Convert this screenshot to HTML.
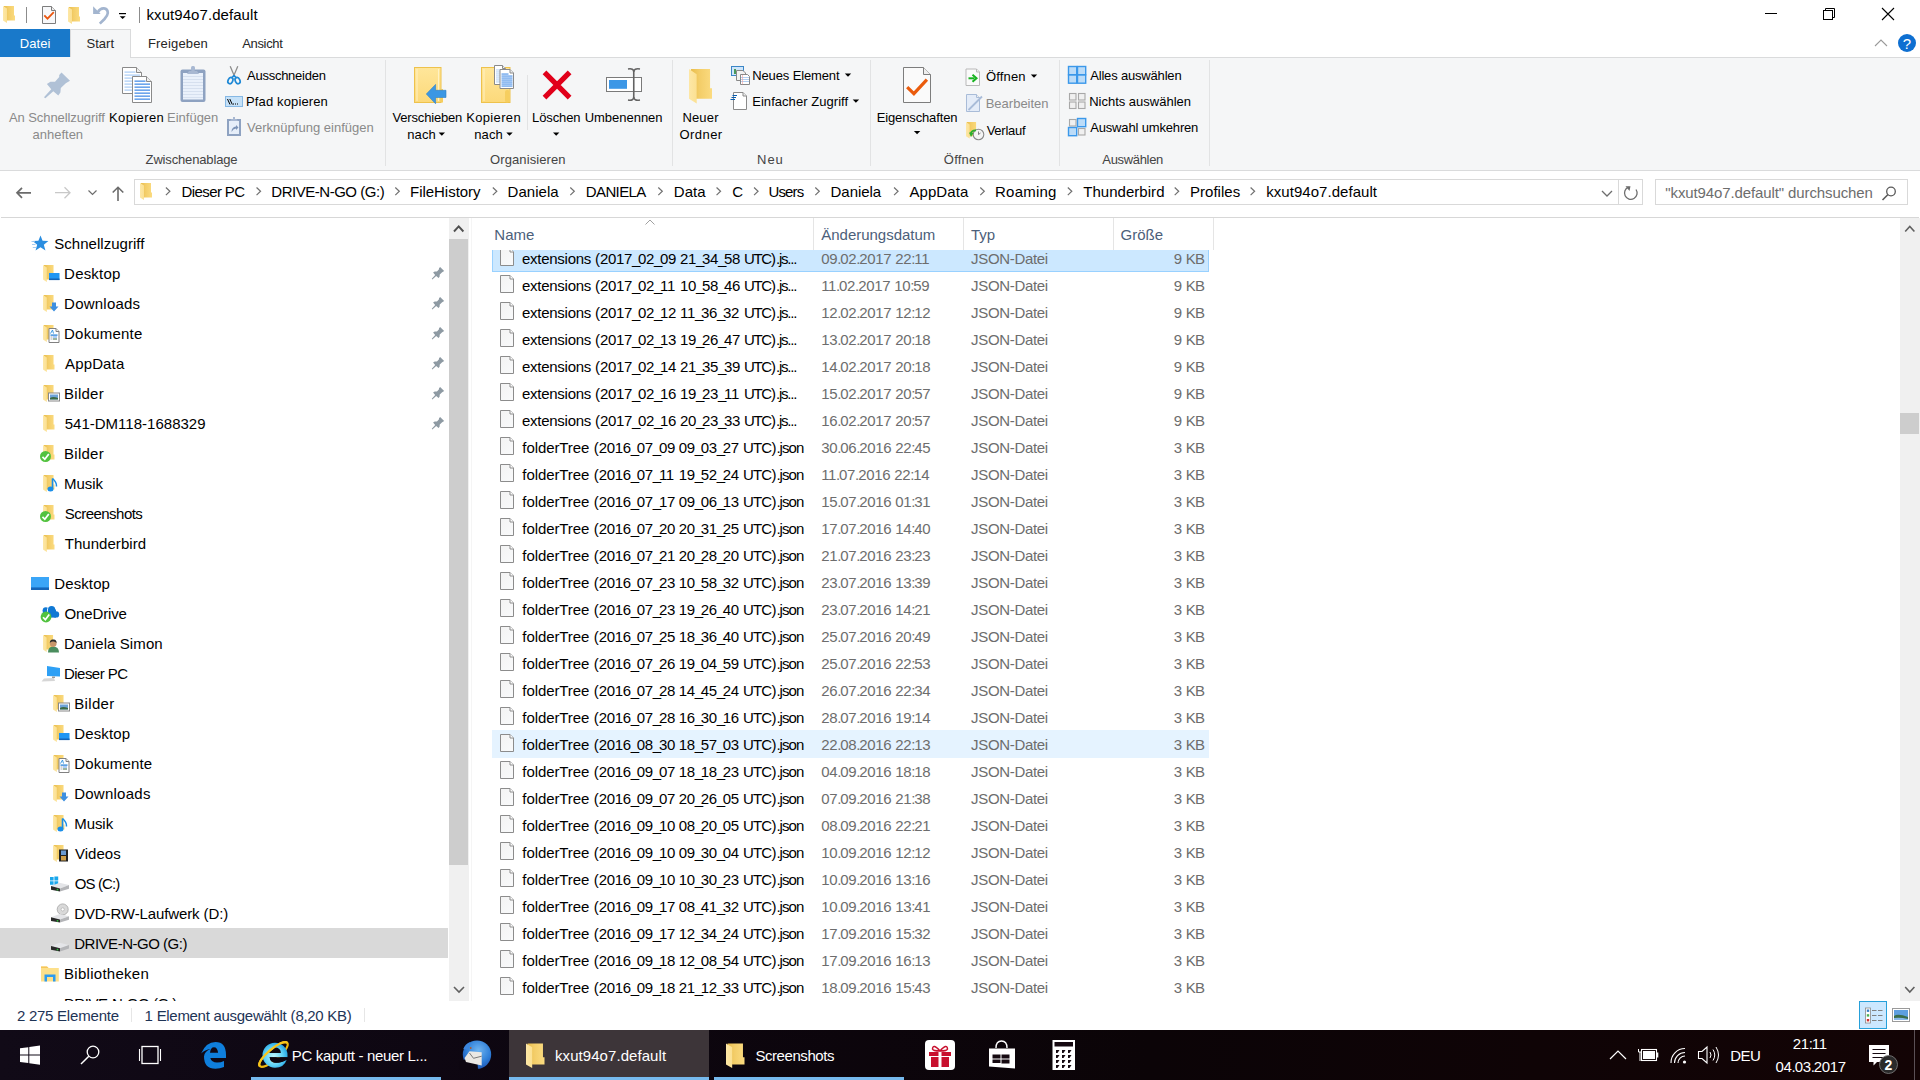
<!DOCTYPE html>
<html><head><meta charset="utf-8"><style>
html,body{margin:0;padding:0;width:1920px;height:1080px;overflow:hidden;background:#fff}
body{position:relative;font-family:"Liberation Sans",sans-serif}
.t{position:absolute;white-space:nowrap}
.r{position:absolute}
.i{position:absolute;overflow:visible}
#nav{position:absolute;left:0;top:218px;width:449px;height:783px;overflow:hidden}
#navin{position:absolute;left:0;top:-218px;width:449px;height:1300px}
#list{position:absolute;left:472px;top:250px;width:1428px;height:751px;overflow:hidden}
#listin{position:absolute;left:-472px;top:-250px;width:1920px;height:1300px}
</style></head><body>
<div class="r" style="left:0px;top:0px;width:1920px;height:29px;background:#fff;"></div><div class="t" style="left:146.50px;top:7.30px;font-size:15px;line-height:15px;color:#000;letter-spacing:0.067px">kxut94o7.default</div><div class="r" style="left:0px;top:29px;width:70px;height:28px;background:#1979ca;"></div><div class="r" style="left:70px;top:29px;width:61px;height:29px;background:#f5f6f7;border:1px solid #dadbdc;border-bottom:none;box-sizing:border-box"></div><div class="t" style="left:19.70px;top:37.00px;font-size:13px;line-height:13px;color:#fff;letter-spacing:0.100px">Datei</div><div class="t" style="left:86.50px;top:37.00px;font-size:13px;line-height:13px;color:#262626;letter-spacing:0.025px">Start</div><div class="t" style="left:148.00px;top:37.00px;font-size:13px;line-height:13px;color:#262626;letter-spacing:0.162px">Freigeben</div><div class="t" style="left:242.20px;top:37.00px;font-size:13px;line-height:13px;color:#262626;letter-spacing:-0.333px">Ansicht</div><div class="r" style="left:0px;top:57px;width:1920px;height:113px;background:#f5f6f7;"></div><div class="r" style="left:130px;top:57px;width:1790px;height:1px;background:#dadbdc;"></div><div class="r" style="left:0px;top:170px;width:1920px;height:1px;background:#dadbdc;"></div><div class="r" style="left:385px;top:60px;width:1px;height:106px;background:#e2e3e4;"></div><div class="r" style="left:672px;top:60px;width:1px;height:106px;background:#e2e3e4;"></div><div class="r" style="left:870px;top:60px;width:1px;height:106px;background:#e2e3e4;"></div><div class="r" style="left:1059px;top:60px;width:1px;height:106px;background:#e2e3e4;"></div><div class="r" style="left:1209px;top:60px;width:1px;height:106px;background:#e2e3e4;"></div><div class="r" style="left:527px;top:75px;width:1px;height:55px;background:#e2e3e4;"></div><div class="t" style="left:9.00px;top:111.00px;font-size:13px;line-height:13px;color:#8a8a8a;letter-spacing:-0.088px">An Schnellzugriff</div><div class="t" style="left:32.50px;top:127.70px;font-size:13px;line-height:13px;color:#8a8a8a">anheften</div><div class="t" style="left:109.00px;top:111.00px;font-size:13px;line-height:13px;color:#000;letter-spacing:0.400px">Kopieren</div><div class="t" style="left:167.00px;top:111.00px;font-size:13px;line-height:13px;color:#8a8a8a">Einfügen</div><div class="t" style="left:247.00px;top:69.00px;font-size:13px;line-height:13px;color:#000;letter-spacing:-0.255px">Ausschneiden</div><div class="t" style="left:246.00px;top:95.00px;font-size:13px;line-height:13px;color:#000;letter-spacing:0.133px">Pfad kopieren</div><div class="t" style="left:247.00px;top:121.00px;font-size:13px;line-height:13px;color:#8a8a8a;letter-spacing:0.016px">Verknüpfung einfügen</div><div class="t" style="left:145.60px;top:152.70px;font-size:13px;line-height:13px;color:#444;letter-spacing:-0.154px">Zwischenablage</div><div class="t" style="left:392.50px;top:111.00px;font-size:13px;line-height:13px;color:#000;letter-spacing:-0.170px">Verschieben</div><div class="t" style="left:407.20px;top:127.70px;font-size:13px;line-height:13px;color:#000;letter-spacing:0.133px">nach</div><div class="t" style="left:466.20px;top:111.00px;font-size:13px;line-height:13px;color:#000;letter-spacing:0.343px">Kopieren</div><div class="t" style="left:474.20px;top:127.70px;font-size:13px;line-height:13px;color:#000;letter-spacing:0.133px">nach</div><div class="t" style="left:532.00px;top:111.00px;font-size:13px;line-height:13px;color:#000;letter-spacing:-0.100px">Löschen</div><div class="t" style="left:584.70px;top:111.00px;font-size:13px;line-height:13px;color:#000;letter-spacing:-0.022px">Umbenennen</div><div class="t" style="left:490.10px;top:152.70px;font-size:13px;line-height:13px;color:#444;letter-spacing:0.091px">Organisieren</div><div class="t" style="left:682.40px;top:111.00px;font-size:13px;line-height:13px;color:#000;letter-spacing:0.175px">Neuer</div><div class="t" style="left:679.40px;top:127.70px;font-size:13px;line-height:13px;color:#000;letter-spacing:0.460px">Ordner</div><div class="t" style="left:752.20px;top:69.00px;font-size:13px;line-height:13px;color:#000;letter-spacing:-0.125px">Neues Element</div><div class="t" style="left:752.20px;top:95.00px;font-size:13px;line-height:13px;color:#000;letter-spacing:0.050px">Einfacher Zugriff</div><div class="t" style="left:757.00px;top:152.70px;font-size:13px;line-height:13px;color:#444;letter-spacing:1.000px">Neu</div><div class="t" style="left:876.70px;top:111.00px;font-size:13px;line-height:13px;color:#000;letter-spacing:-0.133px">Eigenschaften</div><div class="t" style="left:986.10px;top:70.20px;font-size:13px;line-height:13px;color:#000;letter-spacing:0.120px">Öffnen</div><div class="t" style="left:985.70px;top:97.20px;font-size:13px;line-height:13px;color:#8a8a8a">Bearbeiten</div><div class="t" style="left:986.70px;top:124.30px;font-size:13px;line-height:13px;color:#000;letter-spacing:-0.267px">Verlauf</div><div class="t" style="left:943.80px;top:152.70px;font-size:13px;line-height:13px;color:#444;letter-spacing:0.220px">Öffnen</div><div class="t" style="left:1090.20px;top:69.00px;font-size:13px;line-height:13px;color:#000;letter-spacing:-0.179px">Alles auswählen</div><div class="t" style="left:1089.20px;top:95.00px;font-size:13px;line-height:13px;color:#000;letter-spacing:-0.007px">Nichts auswählen</div><div class="t" style="left:1090.20px;top:121.00px;font-size:13px;line-height:13px;color:#000;letter-spacing:-0.160px">Auswahl umkehren</div><div class="t" style="left:1102.30px;top:152.70px;font-size:13px;line-height:13px;color:#444;letter-spacing:-0.325px">Auswählen</div><div class="r" style="left:134px;top:179px;width:1509px;height:26px;background:#fff;border:1px solid #d9d9d9;box-sizing:border-box"></div><div class="r" style="left:1618px;top:180px;width:1px;height:24px;background:#d9d9d9;"></div><div class="r" style="left:1655px;top:179px;width:253px;height:26px;background:#fff;border:1px solid #d9d9d9;box-sizing:border-box"></div><div class="r" style="left:1px;top:217px;width:1918px;height:1px;background:#d7d7d7;"></div><div class="t" style="left:1665.30px;top:185.10px;font-size:15px;line-height:15px;color:#6d6d6d;letter-spacing:-0.110px">&quot;kxut94o7.default&quot; durchsuchen</div><div class="r" style="left:0px;top:928px;width:448px;height:30px;background:#d9d9d9;"></div><div class="r" style="left:449px;top:218px;width:20px;height:783px;background:#f0f0f0;"></div><div class="r" style="left:449px;top:239px;width:19px;height:626px;background:#cdcdcd;"></div><div class="r" style="left:471px;top:218px;width:1px;height:783px;background:#f5f5f5;"></div>
<div id="nav"><div id="navin"><div class="t" style="left:54.30px;top:236.30px;font-size:15px;line-height:15px;color:#000;letter-spacing:0.023px">Schnellzugriff</div><div class="t" style="left:64.10px;top:266.30px;font-size:15px;line-height:15px;color:#000;letter-spacing:0.200px">Desktop</div><div class="t" style="left:64.10px;top:296.30px;font-size:15px;line-height:15px;color:#000;letter-spacing:0.225px">Downloads</div><div class="t" style="left:64.10px;top:326.30px;font-size:15px;line-height:15px;color:#000;letter-spacing:0.187px">Dokumente</div><div class="t" style="left:65.00px;top:356.30px;font-size:15px;line-height:15px;color:#000;letter-spacing:0.150px">AppData</div><div class="t" style="left:64.10px;top:386.30px;font-size:15px;line-height:15px;color:#000;letter-spacing:0.240px">Bilder</div><div class="t" style="left:64.70px;top:416.30px;font-size:15px;line-height:15px;color:#000;letter-spacing:0.013px">541-DM118-1688329</div><div class="t" style="left:64.10px;top:446.30px;font-size:15px;line-height:15px;color:#000;letter-spacing:0.240px">Bilder</div><div class="t" style="left:64.10px;top:476.30px;font-size:15px;line-height:15px;color:#000;letter-spacing:-0.075px">Musik</div><div class="t" style="left:64.70px;top:506.30px;font-size:15px;line-height:15px;color:#000;letter-spacing:-0.520px">Screenshots</div><div class="t" style="left:64.70px;top:536.30px;font-size:15px;line-height:15px;color:#000;letter-spacing:0.050px">Thunderbird</div><div class="t" style="left:54.30px;top:576.30px;font-size:15px;line-height:15px;color:#000;letter-spacing:0.100px">Desktop</div><div class="t" style="left:64.50px;top:606.30px;font-size:15px;line-height:15px;color:#000;letter-spacing:-0.129px">OneDrive</div><div class="t" style="left:64.00px;top:636.30px;font-size:15px;line-height:15px;color:#000;letter-spacing:0.092px">Daniela Simon</div><div class="t" style="left:64.00px;top:666.30px;font-size:15px;line-height:15px;color:#000;letter-spacing:-0.537px">Dieser PC</div><div class="t" style="left:74.20px;top:696.30px;font-size:15px;line-height:15px;color:#000;letter-spacing:0.340px">Bilder</div><div class="t" style="left:74.20px;top:726.30px;font-size:15px;line-height:15px;color:#000;letter-spacing:0.150px">Desktop</div><div class="t" style="left:74.20px;top:756.30px;font-size:15px;line-height:15px;color:#000;letter-spacing:0.162px">Dokumente</div><div class="t" style="left:74.20px;top:786.30px;font-size:15px;line-height:15px;color:#000;letter-spacing:0.250px">Downloads</div><div class="t" style="left:74.20px;top:816.30px;font-size:15px;line-height:15px;color:#000;letter-spacing:-0.050px">Musik</div><div class="t" style="left:75.00px;top:846.30px;font-size:15px;line-height:15px;color:#000;letter-spacing:0.020px">Videos</div><div class="t" style="left:74.70px;top:876.30px;font-size:15px;line-height:15px;color:#000;letter-spacing:-0.867px">OS (C:)</div><div class="t" style="left:74.20px;top:906.30px;font-size:15px;line-height:15px;color:#000;letter-spacing:-0.111px">DVD-RW-Laufwerk (D:)</div><div class="t" style="left:74.20px;top:936.30px;font-size:15px;line-height:15px;color:#000;letter-spacing:-0.479px">DRIVE-N-GO (G:)</div><div class="t" style="left:64.00px;top:966.30px;font-size:15px;line-height:15px;color:#000;letter-spacing:0.282px">Bibliotheken</div><div class="t" style="left:64.00px;top:996.30px;font-size:15px;line-height:15px;color:#000;letter-spacing:-0.479px">DRIVE-N-GO (G:)</div></div></div>
<div id="list"><div id="listin"><div class="r" style="left:492px;top:244px;width:717px;height:28px;background:#cce8ff;border:1px solid #99d1ff;box-sizing:border-box"></div><div class="t" style="left:521.90px;top:251.20px;font-size:15px;line-height:15px;color:#000"><span style="letter-spacing:-0.251px">extensions</span></div><div class="t" style="left:595.00px;top:251.20px;font-size:15px;line-height:15px;color:#000"><span style="letter-spacing:0.005px">(</span><span style="letter-spacing:-0.342px">2017</span><span style="letter-spacing:-2.342px">_</span><span style="letter-spacing:-0.342px">02</span><span style="letter-spacing:-2.342px">_</span><span style="letter-spacing:-0.342px">09</span></div><div class="t" style="left:680.00px;top:251.20px;font-size:15px;line-height:15px;color:#000"><span style="letter-spacing:-0.342px">21</span><span style="letter-spacing:-2.342px">_</span><span style="letter-spacing:-0.342px">34</span><span style="letter-spacing:-2.342px">_</span><span style="letter-spacing:-0.342px">58</span></div><div class="t" style="left:743.90px;top:251.20px;font-size:15px;line-height:15px;color:#000"><span style="letter-spacing:-1.272px">UTC</span><span style="letter-spacing:0.005px">)</span><span style="letter-spacing:-1.167px">.</span><span style="letter-spacing:-1.272px">js</span><span style="letter-spacing:-1.167px">...</span></div><div class="t" style="left:821.20px;top:251.20px;font-size:15px;line-height:15px;color:#6d6d6d"><span style="letter-spacing:-0.342px">09</span><span style="letter-spacing:-1.167px">.</span><span style="letter-spacing:-0.342px">02</span><span style="letter-spacing:-1.167px">.</span><span style="letter-spacing:-0.342px">2017</span><span style="letter-spacing:-0.167px"> </span><span style="letter-spacing:-0.342px">22</span><span style="letter-spacing:-1.167px">:</span><span style="letter-spacing:-0.342px">11</span></div><div class="t" style="left:971.05px;top:251.20px;font-size:15px;line-height:15px;color:#6d6d6d;letter-spacing:-0.322px">JSON-Datei</div><div class="t" style="left:1173.80px;top:251.20px;font-size:15px;line-height:15px;color:#6d6d6d"><span style="letter-spacing:-0.342px">9</span><span style="letter-spacing:-0.167px"> </span><span style="letter-spacing:-0.755px">KB</span></div><div class="t" style="left:521.90px;top:278.20px;font-size:15px;line-height:15px;color:#000"><span style="letter-spacing:-0.251px">extensions</span></div><div class="t" style="left:595.00px;top:278.20px;font-size:15px;line-height:15px;color:#000"><span style="letter-spacing:0.005px">(</span><span style="letter-spacing:-0.342px">2017</span><span style="letter-spacing:-2.342px">_</span><span style="letter-spacing:-0.342px">02</span><span style="letter-spacing:-2.342px">_</span><span style="letter-spacing:-0.342px">11</span></div><div class="t" style="left:680.00px;top:278.20px;font-size:15px;line-height:15px;color:#000"><span style="letter-spacing:-0.342px">10</span><span style="letter-spacing:-2.342px">_</span><span style="letter-spacing:-0.342px">58</span><span style="letter-spacing:-2.342px">_</span><span style="letter-spacing:-0.342px">46</span></div><div class="t" style="left:743.90px;top:278.20px;font-size:15px;line-height:15px;color:#000"><span style="letter-spacing:-1.272px">UTC</span><span style="letter-spacing:0.005px">)</span><span style="letter-spacing:-1.167px">.</span><span style="letter-spacing:-1.272px">js</span><span style="letter-spacing:-1.167px">...</span></div><div class="t" style="left:821.20px;top:278.20px;font-size:15px;line-height:15px;color:#6d6d6d"><span style="letter-spacing:-0.342px">11</span><span style="letter-spacing:-1.167px">.</span><span style="letter-spacing:-0.342px">02</span><span style="letter-spacing:-1.167px">.</span><span style="letter-spacing:-0.342px">2017</span><span style="letter-spacing:-0.167px"> </span><span style="letter-spacing:-0.342px">10</span><span style="letter-spacing:-1.167px">:</span><span style="letter-spacing:-0.342px">59</span></div><div class="t" style="left:971.05px;top:278.20px;font-size:15px;line-height:15px;color:#6d6d6d;letter-spacing:-0.322px">JSON-Datei</div><div class="t" style="left:1173.80px;top:278.20px;font-size:15px;line-height:15px;color:#6d6d6d"><span style="letter-spacing:-0.342px">9</span><span style="letter-spacing:-0.167px"> </span><span style="letter-spacing:-0.755px">KB</span></div><div class="t" style="left:521.90px;top:305.20px;font-size:15px;line-height:15px;color:#000"><span style="letter-spacing:-0.251px">extensions</span></div><div class="t" style="left:595.00px;top:305.20px;font-size:15px;line-height:15px;color:#000"><span style="letter-spacing:0.005px">(</span><span style="letter-spacing:-0.342px">2017</span><span style="letter-spacing:-2.342px">_</span><span style="letter-spacing:-0.342px">02</span><span style="letter-spacing:-2.342px">_</span><span style="letter-spacing:-0.342px">12</span></div><div class="t" style="left:680.00px;top:305.20px;font-size:15px;line-height:15px;color:#000"><span style="letter-spacing:-0.342px">11</span><span style="letter-spacing:-2.342px">_</span><span style="letter-spacing:-0.342px">36</span><span style="letter-spacing:-2.342px">_</span><span style="letter-spacing:-0.342px">32</span></div><div class="t" style="left:743.90px;top:305.20px;font-size:15px;line-height:15px;color:#000"><span style="letter-spacing:-1.272px">UTC</span><span style="letter-spacing:0.005px">)</span><span style="letter-spacing:-1.167px">.</span><span style="letter-spacing:-1.272px">js</span><span style="letter-spacing:-1.167px">...</span></div><div class="t" style="left:821.20px;top:305.20px;font-size:15px;line-height:15px;color:#6d6d6d"><span style="letter-spacing:-0.342px">12</span><span style="letter-spacing:-1.167px">.</span><span style="letter-spacing:-0.342px">02</span><span style="letter-spacing:-1.167px">.</span><span style="letter-spacing:-0.342px">2017</span><span style="letter-spacing:-0.167px"> </span><span style="letter-spacing:-0.342px">12</span><span style="letter-spacing:-1.167px">:</span><span style="letter-spacing:-0.342px">12</span></div><div class="t" style="left:971.05px;top:305.20px;font-size:15px;line-height:15px;color:#6d6d6d;letter-spacing:-0.322px">JSON-Datei</div><div class="t" style="left:1173.80px;top:305.20px;font-size:15px;line-height:15px;color:#6d6d6d"><span style="letter-spacing:-0.342px">9</span><span style="letter-spacing:-0.167px"> </span><span style="letter-spacing:-0.755px">KB</span></div><div class="t" style="left:521.90px;top:332.20px;font-size:15px;line-height:15px;color:#000"><span style="letter-spacing:-0.251px">extensions</span></div><div class="t" style="left:595.00px;top:332.20px;font-size:15px;line-height:15px;color:#000"><span style="letter-spacing:0.005px">(</span><span style="letter-spacing:-0.342px">2017</span><span style="letter-spacing:-2.342px">_</span><span style="letter-spacing:-0.342px">02</span><span style="letter-spacing:-2.342px">_</span><span style="letter-spacing:-0.342px">13</span></div><div class="t" style="left:680.00px;top:332.20px;font-size:15px;line-height:15px;color:#000"><span style="letter-spacing:-0.342px">19</span><span style="letter-spacing:-2.342px">_</span><span style="letter-spacing:-0.342px">26</span><span style="letter-spacing:-2.342px">_</span><span style="letter-spacing:-0.342px">47</span></div><div class="t" style="left:743.90px;top:332.20px;font-size:15px;line-height:15px;color:#000"><span style="letter-spacing:-1.272px">UTC</span><span style="letter-spacing:0.005px">)</span><span style="letter-spacing:-1.167px">.</span><span style="letter-spacing:-1.272px">js</span><span style="letter-spacing:-1.167px">...</span></div><div class="t" style="left:821.20px;top:332.20px;font-size:15px;line-height:15px;color:#6d6d6d"><span style="letter-spacing:-0.342px">13</span><span style="letter-spacing:-1.167px">.</span><span style="letter-spacing:-0.342px">02</span><span style="letter-spacing:-1.167px">.</span><span style="letter-spacing:-0.342px">2017</span><span style="letter-spacing:-0.167px"> </span><span style="letter-spacing:-0.342px">20</span><span style="letter-spacing:-1.167px">:</span><span style="letter-spacing:-0.342px">18</span></div><div class="t" style="left:971.05px;top:332.20px;font-size:15px;line-height:15px;color:#6d6d6d;letter-spacing:-0.322px">JSON-Datei</div><div class="t" style="left:1173.80px;top:332.20px;font-size:15px;line-height:15px;color:#6d6d6d"><span style="letter-spacing:-0.342px">9</span><span style="letter-spacing:-0.167px"> </span><span style="letter-spacing:-0.755px">KB</span></div><div class="t" style="left:521.90px;top:359.20px;font-size:15px;line-height:15px;color:#000"><span style="letter-spacing:-0.251px">extensions</span></div><div class="t" style="left:595.00px;top:359.20px;font-size:15px;line-height:15px;color:#000"><span style="letter-spacing:0.005px">(</span><span style="letter-spacing:-0.342px">2017</span><span style="letter-spacing:-2.342px">_</span><span style="letter-spacing:-0.342px">02</span><span style="letter-spacing:-2.342px">_</span><span style="letter-spacing:-0.342px">14</span></div><div class="t" style="left:680.00px;top:359.20px;font-size:15px;line-height:15px;color:#000"><span style="letter-spacing:-0.342px">21</span><span style="letter-spacing:-2.342px">_</span><span style="letter-spacing:-0.342px">35</span><span style="letter-spacing:-2.342px">_</span><span style="letter-spacing:-0.342px">39</span></div><div class="t" style="left:743.90px;top:359.20px;font-size:15px;line-height:15px;color:#000"><span style="letter-spacing:-1.272px">UTC</span><span style="letter-spacing:0.005px">)</span><span style="letter-spacing:-1.167px">.</span><span style="letter-spacing:-1.272px">js</span><span style="letter-spacing:-1.167px">...</span></div><div class="t" style="left:821.20px;top:359.20px;font-size:15px;line-height:15px;color:#6d6d6d"><span style="letter-spacing:-0.342px">14</span><span style="letter-spacing:-1.167px">.</span><span style="letter-spacing:-0.342px">02</span><span style="letter-spacing:-1.167px">.</span><span style="letter-spacing:-0.342px">2017</span><span style="letter-spacing:-0.167px"> </span><span style="letter-spacing:-0.342px">20</span><span style="letter-spacing:-1.167px">:</span><span style="letter-spacing:-0.342px">18</span></div><div class="t" style="left:971.05px;top:359.20px;font-size:15px;line-height:15px;color:#6d6d6d;letter-spacing:-0.322px">JSON-Datei</div><div class="t" style="left:1173.80px;top:359.20px;font-size:15px;line-height:15px;color:#6d6d6d"><span style="letter-spacing:-0.342px">9</span><span style="letter-spacing:-0.167px"> </span><span style="letter-spacing:-0.755px">KB</span></div><div class="t" style="left:521.90px;top:386.20px;font-size:15px;line-height:15px;color:#000"><span style="letter-spacing:-0.251px">extensions</span></div><div class="t" style="left:595.00px;top:386.20px;font-size:15px;line-height:15px;color:#000"><span style="letter-spacing:0.005px">(</span><span style="letter-spacing:-0.342px">2017</span><span style="letter-spacing:-2.342px">_</span><span style="letter-spacing:-0.342px">02</span><span style="letter-spacing:-2.342px">_</span><span style="letter-spacing:-0.342px">16</span></div><div class="t" style="left:680.00px;top:386.20px;font-size:15px;line-height:15px;color:#000"><span style="letter-spacing:-0.342px">19</span><span style="letter-spacing:-2.342px">_</span><span style="letter-spacing:-0.342px">23</span><span style="letter-spacing:-2.342px">_</span><span style="letter-spacing:-0.342px">11</span></div><div class="t" style="left:743.90px;top:386.20px;font-size:15px;line-height:15px;color:#000"><span style="letter-spacing:-1.272px">UTC</span><span style="letter-spacing:0.005px">)</span><span style="letter-spacing:-1.167px">.</span><span style="letter-spacing:-1.272px">js</span><span style="letter-spacing:-1.167px">...</span></div><div class="t" style="left:821.20px;top:386.20px;font-size:15px;line-height:15px;color:#6d6d6d"><span style="letter-spacing:-0.342px">15</span><span style="letter-spacing:-1.167px">.</span><span style="letter-spacing:-0.342px">02</span><span style="letter-spacing:-1.167px">.</span><span style="letter-spacing:-0.342px">2017</span><span style="letter-spacing:-0.167px"> </span><span style="letter-spacing:-0.342px">20</span><span style="letter-spacing:-1.167px">:</span><span style="letter-spacing:-0.342px">57</span></div><div class="t" style="left:971.05px;top:386.20px;font-size:15px;line-height:15px;color:#6d6d6d;letter-spacing:-0.322px">JSON-Datei</div><div class="t" style="left:1173.80px;top:386.20px;font-size:15px;line-height:15px;color:#6d6d6d"><span style="letter-spacing:-0.342px">9</span><span style="letter-spacing:-0.167px"> </span><span style="letter-spacing:-0.755px">KB</span></div><div class="t" style="left:521.90px;top:413.20px;font-size:15px;line-height:15px;color:#000"><span style="letter-spacing:-0.251px">extensions</span></div><div class="t" style="left:595.00px;top:413.20px;font-size:15px;line-height:15px;color:#000"><span style="letter-spacing:0.005px">(</span><span style="letter-spacing:-0.342px">2017</span><span style="letter-spacing:-2.342px">_</span><span style="letter-spacing:-0.342px">02</span><span style="letter-spacing:-2.342px">_</span><span style="letter-spacing:-0.342px">16</span></div><div class="t" style="left:680.00px;top:413.20px;font-size:15px;line-height:15px;color:#000"><span style="letter-spacing:-0.342px">20</span><span style="letter-spacing:-2.342px">_</span><span style="letter-spacing:-0.342px">23</span><span style="letter-spacing:-2.342px">_</span><span style="letter-spacing:-0.342px">33</span></div><div class="t" style="left:743.90px;top:413.20px;font-size:15px;line-height:15px;color:#000"><span style="letter-spacing:-1.272px">UTC</span><span style="letter-spacing:0.005px">)</span><span style="letter-spacing:-1.167px">.</span><span style="letter-spacing:-1.272px">js</span><span style="letter-spacing:-1.167px">...</span></div><div class="t" style="left:821.20px;top:413.20px;font-size:15px;line-height:15px;color:#6d6d6d"><span style="letter-spacing:-0.342px">16</span><span style="letter-spacing:-1.167px">.</span><span style="letter-spacing:-0.342px">02</span><span style="letter-spacing:-1.167px">.</span><span style="letter-spacing:-0.342px">2017</span><span style="letter-spacing:-0.167px"> </span><span style="letter-spacing:-0.342px">20</span><span style="letter-spacing:-1.167px">:</span><span style="letter-spacing:-0.342px">57</span></div><div class="t" style="left:971.05px;top:413.20px;font-size:15px;line-height:15px;color:#6d6d6d;letter-spacing:-0.322px">JSON-Datei</div><div class="t" style="left:1173.80px;top:413.20px;font-size:15px;line-height:15px;color:#6d6d6d"><span style="letter-spacing:-0.342px">9</span><span style="letter-spacing:-0.167px"> </span><span style="letter-spacing:-0.755px">KB</span></div><div class="t" style="left:522.30px;top:440.20px;font-size:15px;line-height:15px;color:#000"><span style="letter-spacing:-0.081px">folderTree</span></div><div class="t" style="left:593.80px;top:440.20px;font-size:15px;line-height:15px;color:#000"><span style="letter-spacing:0.005px">(</span><span style="letter-spacing:-0.342px">2016</span><span style="letter-spacing:-2.342px">_</span><span style="letter-spacing:-0.342px">07</span><span style="letter-spacing:-2.342px">_</span><span style="letter-spacing:-0.342px">09</span></div><div class="t" style="left:678.70px;top:440.20px;font-size:15px;line-height:15px;color:#000"><span style="letter-spacing:-0.342px">09</span><span style="letter-spacing:-2.342px">_</span><span style="letter-spacing:-0.342px">03</span><span style="letter-spacing:-2.342px">_</span><span style="letter-spacing:-0.342px">27</span></div><div class="t" style="left:743.00px;top:440.20px;font-size:15px;line-height:15px;color:#000"><span style="letter-spacing:-0.821px">UTC</span><span style="letter-spacing:0.005px">)</span><span style="letter-spacing:-1.167px">.</span><span style="letter-spacing:-0.821px">json</span></div><div class="t" style="left:821.20px;top:440.20px;font-size:15px;line-height:15px;color:#6d6d6d"><span style="letter-spacing:-0.342px">30</span><span style="letter-spacing:-1.167px">.</span><span style="letter-spacing:-0.342px">06</span><span style="letter-spacing:-1.167px">.</span><span style="letter-spacing:-0.342px">2016</span><span style="letter-spacing:-0.167px"> </span><span style="letter-spacing:-0.342px">22</span><span style="letter-spacing:-1.167px">:</span><span style="letter-spacing:-0.342px">45</span></div><div class="t" style="left:971.05px;top:440.20px;font-size:15px;line-height:15px;color:#6d6d6d;letter-spacing:-0.322px">JSON-Datei</div><div class="t" style="left:1173.80px;top:440.20px;font-size:15px;line-height:15px;color:#6d6d6d"><span style="letter-spacing:-0.342px">3</span><span style="letter-spacing:-0.167px"> </span><span style="letter-spacing:-0.755px">KB</span></div><div class="t" style="left:522.30px;top:467.20px;font-size:15px;line-height:15px;color:#000"><span style="letter-spacing:-0.081px">folderTree</span></div><div class="t" style="left:593.80px;top:467.20px;font-size:15px;line-height:15px;color:#000"><span style="letter-spacing:0.005px">(</span><span style="letter-spacing:-0.342px">2016</span><span style="letter-spacing:-2.342px">_</span><span style="letter-spacing:-0.342px">07</span><span style="letter-spacing:-2.342px">_</span><span style="letter-spacing:-0.342px">11</span></div><div class="t" style="left:678.70px;top:467.20px;font-size:15px;line-height:15px;color:#000"><span style="letter-spacing:-0.342px">19</span><span style="letter-spacing:-2.342px">_</span><span style="letter-spacing:-0.342px">52</span><span style="letter-spacing:-2.342px">_</span><span style="letter-spacing:-0.342px">24</span></div><div class="t" style="left:743.00px;top:467.20px;font-size:15px;line-height:15px;color:#000"><span style="letter-spacing:-0.821px">UTC</span><span style="letter-spacing:0.005px">)</span><span style="letter-spacing:-1.167px">.</span><span style="letter-spacing:-0.821px">json</span></div><div class="t" style="left:821.20px;top:467.20px;font-size:15px;line-height:15px;color:#6d6d6d"><span style="letter-spacing:-0.342px">11</span><span style="letter-spacing:-1.167px">.</span><span style="letter-spacing:-0.342px">07</span><span style="letter-spacing:-1.167px">.</span><span style="letter-spacing:-0.342px">2016</span><span style="letter-spacing:-0.167px"> </span><span style="letter-spacing:-0.342px">22</span><span style="letter-spacing:-1.167px">:</span><span style="letter-spacing:-0.342px">14</span></div><div class="t" style="left:971.05px;top:467.20px;font-size:15px;line-height:15px;color:#6d6d6d;letter-spacing:-0.322px">JSON-Datei</div><div class="t" style="left:1173.80px;top:467.20px;font-size:15px;line-height:15px;color:#6d6d6d"><span style="letter-spacing:-0.342px">3</span><span style="letter-spacing:-0.167px"> </span><span style="letter-spacing:-0.755px">KB</span></div><div class="t" style="left:522.30px;top:494.20px;font-size:15px;line-height:15px;color:#000"><span style="letter-spacing:-0.081px">folderTree</span></div><div class="t" style="left:593.80px;top:494.20px;font-size:15px;line-height:15px;color:#000"><span style="letter-spacing:0.005px">(</span><span style="letter-spacing:-0.342px">2016</span><span style="letter-spacing:-2.342px">_</span><span style="letter-spacing:-0.342px">07</span><span style="letter-spacing:-2.342px">_</span><span style="letter-spacing:-0.342px">17</span></div><div class="t" style="left:678.70px;top:494.20px;font-size:15px;line-height:15px;color:#000"><span style="letter-spacing:-0.342px">09</span><span style="letter-spacing:-2.342px">_</span><span style="letter-spacing:-0.342px">06</span><span style="letter-spacing:-2.342px">_</span><span style="letter-spacing:-0.342px">13</span></div><div class="t" style="left:743.00px;top:494.20px;font-size:15px;line-height:15px;color:#000"><span style="letter-spacing:-0.821px">UTC</span><span style="letter-spacing:0.005px">)</span><span style="letter-spacing:-1.167px">.</span><span style="letter-spacing:-0.821px">json</span></div><div class="t" style="left:821.20px;top:494.20px;font-size:15px;line-height:15px;color:#6d6d6d"><span style="letter-spacing:-0.342px">15</span><span style="letter-spacing:-1.167px">.</span><span style="letter-spacing:-0.342px">07</span><span style="letter-spacing:-1.167px">.</span><span style="letter-spacing:-0.342px">2016</span><span style="letter-spacing:-0.167px"> </span><span style="letter-spacing:-0.342px">01</span><span style="letter-spacing:-1.167px">:</span><span style="letter-spacing:-0.342px">31</span></div><div class="t" style="left:971.05px;top:494.20px;font-size:15px;line-height:15px;color:#6d6d6d;letter-spacing:-0.322px">JSON-Datei</div><div class="t" style="left:1173.80px;top:494.20px;font-size:15px;line-height:15px;color:#6d6d6d"><span style="letter-spacing:-0.342px">3</span><span style="letter-spacing:-0.167px"> </span><span style="letter-spacing:-0.755px">KB</span></div><div class="t" style="left:522.30px;top:521.20px;font-size:15px;line-height:15px;color:#000"><span style="letter-spacing:-0.081px">folderTree</span></div><div class="t" style="left:593.80px;top:521.20px;font-size:15px;line-height:15px;color:#000"><span style="letter-spacing:0.005px">(</span><span style="letter-spacing:-0.342px">2016</span><span style="letter-spacing:-2.342px">_</span><span style="letter-spacing:-0.342px">07</span><span style="letter-spacing:-2.342px">_</span><span style="letter-spacing:-0.342px">20</span></div><div class="t" style="left:678.70px;top:521.20px;font-size:15px;line-height:15px;color:#000"><span style="letter-spacing:-0.342px">20</span><span style="letter-spacing:-2.342px">_</span><span style="letter-spacing:-0.342px">31</span><span style="letter-spacing:-2.342px">_</span><span style="letter-spacing:-0.342px">25</span></div><div class="t" style="left:743.00px;top:521.20px;font-size:15px;line-height:15px;color:#000"><span style="letter-spacing:-0.821px">UTC</span><span style="letter-spacing:0.005px">)</span><span style="letter-spacing:-1.167px">.</span><span style="letter-spacing:-0.821px">json</span></div><div class="t" style="left:821.20px;top:521.20px;font-size:15px;line-height:15px;color:#6d6d6d"><span style="letter-spacing:-0.342px">17</span><span style="letter-spacing:-1.167px">.</span><span style="letter-spacing:-0.342px">07</span><span style="letter-spacing:-1.167px">.</span><span style="letter-spacing:-0.342px">2016</span><span style="letter-spacing:-0.167px"> </span><span style="letter-spacing:-0.342px">14</span><span style="letter-spacing:-1.167px">:</span><span style="letter-spacing:-0.342px">40</span></div><div class="t" style="left:971.05px;top:521.20px;font-size:15px;line-height:15px;color:#6d6d6d;letter-spacing:-0.322px">JSON-Datei</div><div class="t" style="left:1173.80px;top:521.20px;font-size:15px;line-height:15px;color:#6d6d6d"><span style="letter-spacing:-0.342px">3</span><span style="letter-spacing:-0.167px"> </span><span style="letter-spacing:-0.755px">KB</span></div><div class="t" style="left:522.30px;top:548.20px;font-size:15px;line-height:15px;color:#000"><span style="letter-spacing:-0.081px">folderTree</span></div><div class="t" style="left:593.80px;top:548.20px;font-size:15px;line-height:15px;color:#000"><span style="letter-spacing:0.005px">(</span><span style="letter-spacing:-0.342px">2016</span><span style="letter-spacing:-2.342px">_</span><span style="letter-spacing:-0.342px">07</span><span style="letter-spacing:-2.342px">_</span><span style="letter-spacing:-0.342px">21</span></div><div class="t" style="left:678.70px;top:548.20px;font-size:15px;line-height:15px;color:#000"><span style="letter-spacing:-0.342px">20</span><span style="letter-spacing:-2.342px">_</span><span style="letter-spacing:-0.342px">28</span><span style="letter-spacing:-2.342px">_</span><span style="letter-spacing:-0.342px">20</span></div><div class="t" style="left:743.00px;top:548.20px;font-size:15px;line-height:15px;color:#000"><span style="letter-spacing:-0.821px">UTC</span><span style="letter-spacing:0.005px">)</span><span style="letter-spacing:-1.167px">.</span><span style="letter-spacing:-0.821px">json</span></div><div class="t" style="left:821.20px;top:548.20px;font-size:15px;line-height:15px;color:#6d6d6d"><span style="letter-spacing:-0.342px">21</span><span style="letter-spacing:-1.167px">.</span><span style="letter-spacing:-0.342px">07</span><span style="letter-spacing:-1.167px">.</span><span style="letter-spacing:-0.342px">2016</span><span style="letter-spacing:-0.167px"> </span><span style="letter-spacing:-0.342px">23</span><span style="letter-spacing:-1.167px">:</span><span style="letter-spacing:-0.342px">23</span></div><div class="t" style="left:971.05px;top:548.20px;font-size:15px;line-height:15px;color:#6d6d6d;letter-spacing:-0.322px">JSON-Datei</div><div class="t" style="left:1173.80px;top:548.20px;font-size:15px;line-height:15px;color:#6d6d6d"><span style="letter-spacing:-0.342px">3</span><span style="letter-spacing:-0.167px"> </span><span style="letter-spacing:-0.755px">KB</span></div><div class="t" style="left:522.30px;top:575.20px;font-size:15px;line-height:15px;color:#000"><span style="letter-spacing:-0.081px">folderTree</span></div><div class="t" style="left:593.80px;top:575.20px;font-size:15px;line-height:15px;color:#000"><span style="letter-spacing:0.005px">(</span><span style="letter-spacing:-0.342px">2016</span><span style="letter-spacing:-2.342px">_</span><span style="letter-spacing:-0.342px">07</span><span style="letter-spacing:-2.342px">_</span><span style="letter-spacing:-0.342px">23</span></div><div class="t" style="left:678.70px;top:575.20px;font-size:15px;line-height:15px;color:#000"><span style="letter-spacing:-0.342px">10</span><span style="letter-spacing:-2.342px">_</span><span style="letter-spacing:-0.342px">58</span><span style="letter-spacing:-2.342px">_</span><span style="letter-spacing:-0.342px">32</span></div><div class="t" style="left:743.00px;top:575.20px;font-size:15px;line-height:15px;color:#000"><span style="letter-spacing:-0.821px">UTC</span><span style="letter-spacing:0.005px">)</span><span style="letter-spacing:-1.167px">.</span><span style="letter-spacing:-0.821px">json</span></div><div class="t" style="left:821.20px;top:575.20px;font-size:15px;line-height:15px;color:#6d6d6d"><span style="letter-spacing:-0.342px">23</span><span style="letter-spacing:-1.167px">.</span><span style="letter-spacing:-0.342px">07</span><span style="letter-spacing:-1.167px">.</span><span style="letter-spacing:-0.342px">2016</span><span style="letter-spacing:-0.167px"> </span><span style="letter-spacing:-0.342px">13</span><span style="letter-spacing:-1.167px">:</span><span style="letter-spacing:-0.342px">39</span></div><div class="t" style="left:971.05px;top:575.20px;font-size:15px;line-height:15px;color:#6d6d6d;letter-spacing:-0.322px">JSON-Datei</div><div class="t" style="left:1173.80px;top:575.20px;font-size:15px;line-height:15px;color:#6d6d6d"><span style="letter-spacing:-0.342px">3</span><span style="letter-spacing:-0.167px"> </span><span style="letter-spacing:-0.755px">KB</span></div><div class="t" style="left:522.30px;top:602.20px;font-size:15px;line-height:15px;color:#000"><span style="letter-spacing:-0.081px">folderTree</span></div><div class="t" style="left:593.80px;top:602.20px;font-size:15px;line-height:15px;color:#000"><span style="letter-spacing:0.005px">(</span><span style="letter-spacing:-0.342px">2016</span><span style="letter-spacing:-2.342px">_</span><span style="letter-spacing:-0.342px">07</span><span style="letter-spacing:-2.342px">_</span><span style="letter-spacing:-0.342px">23</span></div><div class="t" style="left:678.70px;top:602.20px;font-size:15px;line-height:15px;color:#000"><span style="letter-spacing:-0.342px">19</span><span style="letter-spacing:-2.342px">_</span><span style="letter-spacing:-0.342px">26</span><span style="letter-spacing:-2.342px">_</span><span style="letter-spacing:-0.342px">40</span></div><div class="t" style="left:743.00px;top:602.20px;font-size:15px;line-height:15px;color:#000"><span style="letter-spacing:-0.821px">UTC</span><span style="letter-spacing:0.005px">)</span><span style="letter-spacing:-1.167px">.</span><span style="letter-spacing:-0.821px">json</span></div><div class="t" style="left:821.20px;top:602.20px;font-size:15px;line-height:15px;color:#6d6d6d"><span style="letter-spacing:-0.342px">23</span><span style="letter-spacing:-1.167px">.</span><span style="letter-spacing:-0.342px">07</span><span style="letter-spacing:-1.167px">.</span><span style="letter-spacing:-0.342px">2016</span><span style="letter-spacing:-0.167px"> </span><span style="letter-spacing:-0.342px">14</span><span style="letter-spacing:-1.167px">:</span><span style="letter-spacing:-0.342px">21</span></div><div class="t" style="left:971.05px;top:602.20px;font-size:15px;line-height:15px;color:#6d6d6d;letter-spacing:-0.322px">JSON-Datei</div><div class="t" style="left:1173.80px;top:602.20px;font-size:15px;line-height:15px;color:#6d6d6d"><span style="letter-spacing:-0.342px">3</span><span style="letter-spacing:-0.167px"> </span><span style="letter-spacing:-0.755px">KB</span></div><div class="t" style="left:522.30px;top:629.20px;font-size:15px;line-height:15px;color:#000"><span style="letter-spacing:-0.081px">folderTree</span></div><div class="t" style="left:593.80px;top:629.20px;font-size:15px;line-height:15px;color:#000"><span style="letter-spacing:0.005px">(</span><span style="letter-spacing:-0.342px">2016</span><span style="letter-spacing:-2.342px">_</span><span style="letter-spacing:-0.342px">07</span><span style="letter-spacing:-2.342px">_</span><span style="letter-spacing:-0.342px">25</span></div><div class="t" style="left:678.70px;top:629.20px;font-size:15px;line-height:15px;color:#000"><span style="letter-spacing:-0.342px">18</span><span style="letter-spacing:-2.342px">_</span><span style="letter-spacing:-0.342px">36</span><span style="letter-spacing:-2.342px">_</span><span style="letter-spacing:-0.342px">40</span></div><div class="t" style="left:743.00px;top:629.20px;font-size:15px;line-height:15px;color:#000"><span style="letter-spacing:-0.821px">UTC</span><span style="letter-spacing:0.005px">)</span><span style="letter-spacing:-1.167px">.</span><span style="letter-spacing:-0.821px">json</span></div><div class="t" style="left:821.20px;top:629.20px;font-size:15px;line-height:15px;color:#6d6d6d"><span style="letter-spacing:-0.342px">25</span><span style="letter-spacing:-1.167px">.</span><span style="letter-spacing:-0.342px">07</span><span style="letter-spacing:-1.167px">.</span><span style="letter-spacing:-0.342px">2016</span><span style="letter-spacing:-0.167px"> </span><span style="letter-spacing:-0.342px">20</span><span style="letter-spacing:-1.167px">:</span><span style="letter-spacing:-0.342px">49</span></div><div class="t" style="left:971.05px;top:629.20px;font-size:15px;line-height:15px;color:#6d6d6d;letter-spacing:-0.322px">JSON-Datei</div><div class="t" style="left:1173.80px;top:629.20px;font-size:15px;line-height:15px;color:#6d6d6d"><span style="letter-spacing:-0.342px">3</span><span style="letter-spacing:-0.167px"> </span><span style="letter-spacing:-0.755px">KB</span></div><div class="t" style="left:522.30px;top:656.20px;font-size:15px;line-height:15px;color:#000"><span style="letter-spacing:-0.081px">folderTree</span></div><div class="t" style="left:593.80px;top:656.20px;font-size:15px;line-height:15px;color:#000"><span style="letter-spacing:0.005px">(</span><span style="letter-spacing:-0.342px">2016</span><span style="letter-spacing:-2.342px">_</span><span style="letter-spacing:-0.342px">07</span><span style="letter-spacing:-2.342px">_</span><span style="letter-spacing:-0.342px">26</span></div><div class="t" style="left:678.70px;top:656.20px;font-size:15px;line-height:15px;color:#000"><span style="letter-spacing:-0.342px">19</span><span style="letter-spacing:-2.342px">_</span><span style="letter-spacing:-0.342px">04</span><span style="letter-spacing:-2.342px">_</span><span style="letter-spacing:-0.342px">59</span></div><div class="t" style="left:743.00px;top:656.20px;font-size:15px;line-height:15px;color:#000"><span style="letter-spacing:-0.821px">UTC</span><span style="letter-spacing:0.005px">)</span><span style="letter-spacing:-1.167px">.</span><span style="letter-spacing:-0.821px">json</span></div><div class="t" style="left:821.20px;top:656.20px;font-size:15px;line-height:15px;color:#6d6d6d"><span style="letter-spacing:-0.342px">25</span><span style="letter-spacing:-1.167px">.</span><span style="letter-spacing:-0.342px">07</span><span style="letter-spacing:-1.167px">.</span><span style="letter-spacing:-0.342px">2016</span><span style="letter-spacing:-0.167px"> </span><span style="letter-spacing:-0.342px">22</span><span style="letter-spacing:-1.167px">:</span><span style="letter-spacing:-0.342px">53</span></div><div class="t" style="left:971.05px;top:656.20px;font-size:15px;line-height:15px;color:#6d6d6d;letter-spacing:-0.322px">JSON-Datei</div><div class="t" style="left:1173.80px;top:656.20px;font-size:15px;line-height:15px;color:#6d6d6d"><span style="letter-spacing:-0.342px">3</span><span style="letter-spacing:-0.167px"> </span><span style="letter-spacing:-0.755px">KB</span></div><div class="t" style="left:522.30px;top:683.20px;font-size:15px;line-height:15px;color:#000"><span style="letter-spacing:-0.081px">folderTree</span></div><div class="t" style="left:593.80px;top:683.20px;font-size:15px;line-height:15px;color:#000"><span style="letter-spacing:0.005px">(</span><span style="letter-spacing:-0.342px">2016</span><span style="letter-spacing:-2.342px">_</span><span style="letter-spacing:-0.342px">07</span><span style="letter-spacing:-2.342px">_</span><span style="letter-spacing:-0.342px">28</span></div><div class="t" style="left:678.70px;top:683.20px;font-size:15px;line-height:15px;color:#000"><span style="letter-spacing:-0.342px">14</span><span style="letter-spacing:-2.342px">_</span><span style="letter-spacing:-0.342px">45</span><span style="letter-spacing:-2.342px">_</span><span style="letter-spacing:-0.342px">24</span></div><div class="t" style="left:743.00px;top:683.20px;font-size:15px;line-height:15px;color:#000"><span style="letter-spacing:-0.821px">UTC</span><span style="letter-spacing:0.005px">)</span><span style="letter-spacing:-1.167px">.</span><span style="letter-spacing:-0.821px">json</span></div><div class="t" style="left:821.20px;top:683.20px;font-size:15px;line-height:15px;color:#6d6d6d"><span style="letter-spacing:-0.342px">26</span><span style="letter-spacing:-1.167px">.</span><span style="letter-spacing:-0.342px">07</span><span style="letter-spacing:-1.167px">.</span><span style="letter-spacing:-0.342px">2016</span><span style="letter-spacing:-0.167px"> </span><span style="letter-spacing:-0.342px">22</span><span style="letter-spacing:-1.167px">:</span><span style="letter-spacing:-0.342px">34</span></div><div class="t" style="left:971.05px;top:683.20px;font-size:15px;line-height:15px;color:#6d6d6d;letter-spacing:-0.322px">JSON-Datei</div><div class="t" style="left:1173.80px;top:683.20px;font-size:15px;line-height:15px;color:#6d6d6d"><span style="letter-spacing:-0.342px">3</span><span style="letter-spacing:-0.167px"> </span><span style="letter-spacing:-0.755px">KB</span></div><div class="t" style="left:522.30px;top:710.20px;font-size:15px;line-height:15px;color:#000"><span style="letter-spacing:-0.081px">folderTree</span></div><div class="t" style="left:593.80px;top:710.20px;font-size:15px;line-height:15px;color:#000"><span style="letter-spacing:0.005px">(</span><span style="letter-spacing:-0.342px">2016</span><span style="letter-spacing:-2.342px">_</span><span style="letter-spacing:-0.342px">07</span><span style="letter-spacing:-2.342px">_</span><span style="letter-spacing:-0.342px">28</span></div><div class="t" style="left:678.70px;top:710.20px;font-size:15px;line-height:15px;color:#000"><span style="letter-spacing:-0.342px">16</span><span style="letter-spacing:-2.342px">_</span><span style="letter-spacing:-0.342px">30</span><span style="letter-spacing:-2.342px">_</span><span style="letter-spacing:-0.342px">16</span></div><div class="t" style="left:743.00px;top:710.20px;font-size:15px;line-height:15px;color:#000"><span style="letter-spacing:-0.821px">UTC</span><span style="letter-spacing:0.005px">)</span><span style="letter-spacing:-1.167px">.</span><span style="letter-spacing:-0.821px">json</span></div><div class="t" style="left:821.20px;top:710.20px;font-size:15px;line-height:15px;color:#6d6d6d"><span style="letter-spacing:-0.342px">28</span><span style="letter-spacing:-1.167px">.</span><span style="letter-spacing:-0.342px">07</span><span style="letter-spacing:-1.167px">.</span><span style="letter-spacing:-0.342px">2016</span><span style="letter-spacing:-0.167px"> </span><span style="letter-spacing:-0.342px">19</span><span style="letter-spacing:-1.167px">:</span><span style="letter-spacing:-0.342px">14</span></div><div class="t" style="left:971.05px;top:710.20px;font-size:15px;line-height:15px;color:#6d6d6d;letter-spacing:-0.322px">JSON-Datei</div><div class="t" style="left:1173.80px;top:710.20px;font-size:15px;line-height:15px;color:#6d6d6d"><span style="letter-spacing:-0.342px">3</span><span style="letter-spacing:-0.167px"> </span><span style="letter-spacing:-0.755px">KB</span></div><div class="r" style="left:492px;top:730px;width:717px;height:28px;background:#e5f3ff;"></div><div class="t" style="left:522.30px;top:737.20px;font-size:15px;line-height:15px;color:#000"><span style="letter-spacing:-0.081px">folderTree</span></div><div class="t" style="left:593.80px;top:737.20px;font-size:15px;line-height:15px;color:#000"><span style="letter-spacing:0.005px">(</span><span style="letter-spacing:-0.342px">2016</span><span style="letter-spacing:-2.342px">_</span><span style="letter-spacing:-0.342px">08</span><span style="letter-spacing:-2.342px">_</span><span style="letter-spacing:-0.342px">30</span></div><div class="t" style="left:678.70px;top:737.20px;font-size:15px;line-height:15px;color:#000"><span style="letter-spacing:-0.342px">18</span><span style="letter-spacing:-2.342px">_</span><span style="letter-spacing:-0.342px">57</span><span style="letter-spacing:-2.342px">_</span><span style="letter-spacing:-0.342px">03</span></div><div class="t" style="left:743.00px;top:737.20px;font-size:15px;line-height:15px;color:#000"><span style="letter-spacing:-0.821px">UTC</span><span style="letter-spacing:0.005px">)</span><span style="letter-spacing:-1.167px">.</span><span style="letter-spacing:-0.821px">json</span></div><div class="t" style="left:821.20px;top:737.20px;font-size:15px;line-height:15px;color:#6d6d6d"><span style="letter-spacing:-0.342px">22</span><span style="letter-spacing:-1.167px">.</span><span style="letter-spacing:-0.342px">08</span><span style="letter-spacing:-1.167px">.</span><span style="letter-spacing:-0.342px">2016</span><span style="letter-spacing:-0.167px"> </span><span style="letter-spacing:-0.342px">22</span><span style="letter-spacing:-1.167px">:</span><span style="letter-spacing:-0.342px">13</span></div><div class="t" style="left:971.05px;top:737.20px;font-size:15px;line-height:15px;color:#6d6d6d;letter-spacing:-0.322px">JSON-Datei</div><div class="t" style="left:1173.80px;top:737.20px;font-size:15px;line-height:15px;color:#6d6d6d"><span style="letter-spacing:-0.342px">3</span><span style="letter-spacing:-0.167px"> </span><span style="letter-spacing:-0.755px">KB</span></div><div class="t" style="left:522.30px;top:764.20px;font-size:15px;line-height:15px;color:#000"><span style="letter-spacing:-0.081px">folderTree</span></div><div class="t" style="left:593.80px;top:764.20px;font-size:15px;line-height:15px;color:#000"><span style="letter-spacing:0.005px">(</span><span style="letter-spacing:-0.342px">2016</span><span style="letter-spacing:-2.342px">_</span><span style="letter-spacing:-0.342px">09</span><span style="letter-spacing:-2.342px">_</span><span style="letter-spacing:-0.342px">07</span></div><div class="t" style="left:678.70px;top:764.20px;font-size:15px;line-height:15px;color:#000"><span style="letter-spacing:-0.342px">18</span><span style="letter-spacing:-2.342px">_</span><span style="letter-spacing:-0.342px">18</span><span style="letter-spacing:-2.342px">_</span><span style="letter-spacing:-0.342px">23</span></div><div class="t" style="left:743.00px;top:764.20px;font-size:15px;line-height:15px;color:#000"><span style="letter-spacing:-0.821px">UTC</span><span style="letter-spacing:0.005px">)</span><span style="letter-spacing:-1.167px">.</span><span style="letter-spacing:-0.821px">json</span></div><div class="t" style="left:821.20px;top:764.20px;font-size:15px;line-height:15px;color:#6d6d6d"><span style="letter-spacing:-0.342px">04</span><span style="letter-spacing:-1.167px">.</span><span style="letter-spacing:-0.342px">09</span><span style="letter-spacing:-1.167px">.</span><span style="letter-spacing:-0.342px">2016</span><span style="letter-spacing:-0.167px"> </span><span style="letter-spacing:-0.342px">18</span><span style="letter-spacing:-1.167px">:</span><span style="letter-spacing:-0.342px">18</span></div><div class="t" style="left:971.05px;top:764.20px;font-size:15px;line-height:15px;color:#6d6d6d;letter-spacing:-0.322px">JSON-Datei</div><div class="t" style="left:1173.80px;top:764.20px;font-size:15px;line-height:15px;color:#6d6d6d"><span style="letter-spacing:-0.342px">3</span><span style="letter-spacing:-0.167px"> </span><span style="letter-spacing:-0.755px">KB</span></div><div class="t" style="left:522.30px;top:791.20px;font-size:15px;line-height:15px;color:#000"><span style="letter-spacing:-0.081px">folderTree</span></div><div class="t" style="left:593.80px;top:791.20px;font-size:15px;line-height:15px;color:#000"><span style="letter-spacing:0.005px">(</span><span style="letter-spacing:-0.342px">2016</span><span style="letter-spacing:-2.342px">_</span><span style="letter-spacing:-0.342px">09</span><span style="letter-spacing:-2.342px">_</span><span style="letter-spacing:-0.342px">07</span></div><div class="t" style="left:678.70px;top:791.20px;font-size:15px;line-height:15px;color:#000"><span style="letter-spacing:-0.342px">20</span><span style="letter-spacing:-2.342px">_</span><span style="letter-spacing:-0.342px">26</span><span style="letter-spacing:-2.342px">_</span><span style="letter-spacing:-0.342px">05</span></div><div class="t" style="left:743.00px;top:791.20px;font-size:15px;line-height:15px;color:#000"><span style="letter-spacing:-0.821px">UTC</span><span style="letter-spacing:0.005px">)</span><span style="letter-spacing:-1.167px">.</span><span style="letter-spacing:-0.821px">json</span></div><div class="t" style="left:821.20px;top:791.20px;font-size:15px;line-height:15px;color:#6d6d6d"><span style="letter-spacing:-0.342px">07</span><span style="letter-spacing:-1.167px">.</span><span style="letter-spacing:-0.342px">09</span><span style="letter-spacing:-1.167px">.</span><span style="letter-spacing:-0.342px">2016</span><span style="letter-spacing:-0.167px"> </span><span style="letter-spacing:-0.342px">21</span><span style="letter-spacing:-1.167px">:</span><span style="letter-spacing:-0.342px">38</span></div><div class="t" style="left:971.05px;top:791.20px;font-size:15px;line-height:15px;color:#6d6d6d;letter-spacing:-0.322px">JSON-Datei</div><div class="t" style="left:1173.80px;top:791.20px;font-size:15px;line-height:15px;color:#6d6d6d"><span style="letter-spacing:-0.342px">3</span><span style="letter-spacing:-0.167px"> </span><span style="letter-spacing:-0.755px">KB</span></div><div class="t" style="left:522.30px;top:818.20px;font-size:15px;line-height:15px;color:#000"><span style="letter-spacing:-0.081px">folderTree</span></div><div class="t" style="left:593.80px;top:818.20px;font-size:15px;line-height:15px;color:#000"><span style="letter-spacing:0.005px">(</span><span style="letter-spacing:-0.342px">2016</span><span style="letter-spacing:-2.342px">_</span><span style="letter-spacing:-0.342px">09</span><span style="letter-spacing:-2.342px">_</span><span style="letter-spacing:-0.342px">10</span></div><div class="t" style="left:678.70px;top:818.20px;font-size:15px;line-height:15px;color:#000"><span style="letter-spacing:-0.342px">08</span><span style="letter-spacing:-2.342px">_</span><span style="letter-spacing:-0.342px">20</span><span style="letter-spacing:-2.342px">_</span><span style="letter-spacing:-0.342px">05</span></div><div class="t" style="left:743.00px;top:818.20px;font-size:15px;line-height:15px;color:#000"><span style="letter-spacing:-0.821px">UTC</span><span style="letter-spacing:0.005px">)</span><span style="letter-spacing:-1.167px">.</span><span style="letter-spacing:-0.821px">json</span></div><div class="t" style="left:821.20px;top:818.20px;font-size:15px;line-height:15px;color:#6d6d6d"><span style="letter-spacing:-0.342px">08</span><span style="letter-spacing:-1.167px">.</span><span style="letter-spacing:-0.342px">09</span><span style="letter-spacing:-1.167px">.</span><span style="letter-spacing:-0.342px">2016</span><span style="letter-spacing:-0.167px"> </span><span style="letter-spacing:-0.342px">22</span><span style="letter-spacing:-1.167px">:</span><span style="letter-spacing:-0.342px">21</span></div><div class="t" style="left:971.05px;top:818.20px;font-size:15px;line-height:15px;color:#6d6d6d;letter-spacing:-0.322px">JSON-Datei</div><div class="t" style="left:1173.80px;top:818.20px;font-size:15px;line-height:15px;color:#6d6d6d"><span style="letter-spacing:-0.342px">3</span><span style="letter-spacing:-0.167px"> </span><span style="letter-spacing:-0.755px">KB</span></div><div class="t" style="left:522.30px;top:845.20px;font-size:15px;line-height:15px;color:#000"><span style="letter-spacing:-0.081px">folderTree</span></div><div class="t" style="left:593.80px;top:845.20px;font-size:15px;line-height:15px;color:#000"><span style="letter-spacing:0.005px">(</span><span style="letter-spacing:-0.342px">2016</span><span style="letter-spacing:-2.342px">_</span><span style="letter-spacing:-0.342px">09</span><span style="letter-spacing:-2.342px">_</span><span style="letter-spacing:-0.342px">10</span></div><div class="t" style="left:678.70px;top:845.20px;font-size:15px;line-height:15px;color:#000"><span style="letter-spacing:-0.342px">09</span><span style="letter-spacing:-2.342px">_</span><span style="letter-spacing:-0.342px">30</span><span style="letter-spacing:-2.342px">_</span><span style="letter-spacing:-0.342px">04</span></div><div class="t" style="left:743.00px;top:845.20px;font-size:15px;line-height:15px;color:#000"><span style="letter-spacing:-0.821px">UTC</span><span style="letter-spacing:0.005px">)</span><span style="letter-spacing:-1.167px">.</span><span style="letter-spacing:-0.821px">json</span></div><div class="t" style="left:821.20px;top:845.20px;font-size:15px;line-height:15px;color:#6d6d6d"><span style="letter-spacing:-0.342px">10</span><span style="letter-spacing:-1.167px">.</span><span style="letter-spacing:-0.342px">09</span><span style="letter-spacing:-1.167px">.</span><span style="letter-spacing:-0.342px">2016</span><span style="letter-spacing:-0.167px"> </span><span style="letter-spacing:-0.342px">12</span><span style="letter-spacing:-1.167px">:</span><span style="letter-spacing:-0.342px">12</span></div><div class="t" style="left:971.05px;top:845.20px;font-size:15px;line-height:15px;color:#6d6d6d;letter-spacing:-0.322px">JSON-Datei</div><div class="t" style="left:1173.80px;top:845.20px;font-size:15px;line-height:15px;color:#6d6d6d"><span style="letter-spacing:-0.342px">3</span><span style="letter-spacing:-0.167px"> </span><span style="letter-spacing:-0.755px">KB</span></div><div class="t" style="left:522.30px;top:872.20px;font-size:15px;line-height:15px;color:#000"><span style="letter-spacing:-0.081px">folderTree</span></div><div class="t" style="left:593.80px;top:872.20px;font-size:15px;line-height:15px;color:#000"><span style="letter-spacing:0.005px">(</span><span style="letter-spacing:-0.342px">2016</span><span style="letter-spacing:-2.342px">_</span><span style="letter-spacing:-0.342px">09</span><span style="letter-spacing:-2.342px">_</span><span style="letter-spacing:-0.342px">10</span></div><div class="t" style="left:678.70px;top:872.20px;font-size:15px;line-height:15px;color:#000"><span style="letter-spacing:-0.342px">10</span><span style="letter-spacing:-2.342px">_</span><span style="letter-spacing:-0.342px">30</span><span style="letter-spacing:-2.342px">_</span><span style="letter-spacing:-0.342px">23</span></div><div class="t" style="left:743.00px;top:872.20px;font-size:15px;line-height:15px;color:#000"><span style="letter-spacing:-0.821px">UTC</span><span style="letter-spacing:0.005px">)</span><span style="letter-spacing:-1.167px">.</span><span style="letter-spacing:-0.821px">json</span></div><div class="t" style="left:821.20px;top:872.20px;font-size:15px;line-height:15px;color:#6d6d6d"><span style="letter-spacing:-0.342px">10</span><span style="letter-spacing:-1.167px">.</span><span style="letter-spacing:-0.342px">09</span><span style="letter-spacing:-1.167px">.</span><span style="letter-spacing:-0.342px">2016</span><span style="letter-spacing:-0.167px"> </span><span style="letter-spacing:-0.342px">13</span><span style="letter-spacing:-1.167px">:</span><span style="letter-spacing:-0.342px">16</span></div><div class="t" style="left:971.05px;top:872.20px;font-size:15px;line-height:15px;color:#6d6d6d;letter-spacing:-0.322px">JSON-Datei</div><div class="t" style="left:1173.80px;top:872.20px;font-size:15px;line-height:15px;color:#6d6d6d"><span style="letter-spacing:-0.342px">3</span><span style="letter-spacing:-0.167px"> </span><span style="letter-spacing:-0.755px">KB</span></div><div class="t" style="left:522.30px;top:899.20px;font-size:15px;line-height:15px;color:#000"><span style="letter-spacing:-0.081px">folderTree</span></div><div class="t" style="left:593.80px;top:899.20px;font-size:15px;line-height:15px;color:#000"><span style="letter-spacing:0.005px">(</span><span style="letter-spacing:-0.342px">2016</span><span style="letter-spacing:-2.342px">_</span><span style="letter-spacing:-0.342px">09</span><span style="letter-spacing:-2.342px">_</span><span style="letter-spacing:-0.342px">17</span></div><div class="t" style="left:678.70px;top:899.20px;font-size:15px;line-height:15px;color:#000"><span style="letter-spacing:-0.342px">08</span><span style="letter-spacing:-2.342px">_</span><span style="letter-spacing:-0.342px">41</span><span style="letter-spacing:-2.342px">_</span><span style="letter-spacing:-0.342px">32</span></div><div class="t" style="left:743.00px;top:899.20px;font-size:15px;line-height:15px;color:#000"><span style="letter-spacing:-0.821px">UTC</span><span style="letter-spacing:0.005px">)</span><span style="letter-spacing:-1.167px">.</span><span style="letter-spacing:-0.821px">json</span></div><div class="t" style="left:821.20px;top:899.20px;font-size:15px;line-height:15px;color:#6d6d6d"><span style="letter-spacing:-0.342px">10</span><span style="letter-spacing:-1.167px">.</span><span style="letter-spacing:-0.342px">09</span><span style="letter-spacing:-1.167px">.</span><span style="letter-spacing:-0.342px">2016</span><span style="letter-spacing:-0.167px"> </span><span style="letter-spacing:-0.342px">13</span><span style="letter-spacing:-1.167px">:</span><span style="letter-spacing:-0.342px">41</span></div><div class="t" style="left:971.05px;top:899.20px;font-size:15px;line-height:15px;color:#6d6d6d;letter-spacing:-0.322px">JSON-Datei</div><div class="t" style="left:1173.80px;top:899.20px;font-size:15px;line-height:15px;color:#6d6d6d"><span style="letter-spacing:-0.342px">3</span><span style="letter-spacing:-0.167px"> </span><span style="letter-spacing:-0.755px">KB</span></div><div class="t" style="left:522.30px;top:926.20px;font-size:15px;line-height:15px;color:#000"><span style="letter-spacing:-0.081px">folderTree</span></div><div class="t" style="left:593.80px;top:926.20px;font-size:15px;line-height:15px;color:#000"><span style="letter-spacing:0.005px">(</span><span style="letter-spacing:-0.342px">2016</span><span style="letter-spacing:-2.342px">_</span><span style="letter-spacing:-0.342px">09</span><span style="letter-spacing:-2.342px">_</span><span style="letter-spacing:-0.342px">17</span></div><div class="t" style="left:678.70px;top:926.20px;font-size:15px;line-height:15px;color:#000"><span style="letter-spacing:-0.342px">12</span><span style="letter-spacing:-2.342px">_</span><span style="letter-spacing:-0.342px">34</span><span style="letter-spacing:-2.342px">_</span><span style="letter-spacing:-0.342px">24</span></div><div class="t" style="left:743.00px;top:926.20px;font-size:15px;line-height:15px;color:#000"><span style="letter-spacing:-0.821px">UTC</span><span style="letter-spacing:0.005px">)</span><span style="letter-spacing:-1.167px">.</span><span style="letter-spacing:-0.821px">json</span></div><div class="t" style="left:821.20px;top:926.20px;font-size:15px;line-height:15px;color:#6d6d6d"><span style="letter-spacing:-0.342px">17</span><span style="letter-spacing:-1.167px">.</span><span style="letter-spacing:-0.342px">09</span><span style="letter-spacing:-1.167px">.</span><span style="letter-spacing:-0.342px">2016</span><span style="letter-spacing:-0.167px"> </span><span style="letter-spacing:-0.342px">15</span><span style="letter-spacing:-1.167px">:</span><span style="letter-spacing:-0.342px">32</span></div><div class="t" style="left:971.05px;top:926.20px;font-size:15px;line-height:15px;color:#6d6d6d;letter-spacing:-0.322px">JSON-Datei</div><div class="t" style="left:1173.80px;top:926.20px;font-size:15px;line-height:15px;color:#6d6d6d"><span style="letter-spacing:-0.342px">3</span><span style="letter-spacing:-0.167px"> </span><span style="letter-spacing:-0.755px">KB</span></div><div class="t" style="left:522.30px;top:953.20px;font-size:15px;line-height:15px;color:#000"><span style="letter-spacing:-0.081px">folderTree</span></div><div class="t" style="left:593.80px;top:953.20px;font-size:15px;line-height:15px;color:#000"><span style="letter-spacing:0.005px">(</span><span style="letter-spacing:-0.342px">2016</span><span style="letter-spacing:-2.342px">_</span><span style="letter-spacing:-0.342px">09</span><span style="letter-spacing:-2.342px">_</span><span style="letter-spacing:-0.342px">18</span></div><div class="t" style="left:678.70px;top:953.20px;font-size:15px;line-height:15px;color:#000"><span style="letter-spacing:-0.342px">12</span><span style="letter-spacing:-2.342px">_</span><span style="letter-spacing:-0.342px">08</span><span style="letter-spacing:-2.342px">_</span><span style="letter-spacing:-0.342px">54</span></div><div class="t" style="left:743.00px;top:953.20px;font-size:15px;line-height:15px;color:#000"><span style="letter-spacing:-0.821px">UTC</span><span style="letter-spacing:0.005px">)</span><span style="letter-spacing:-1.167px">.</span><span style="letter-spacing:-0.821px">json</span></div><div class="t" style="left:821.20px;top:953.20px;font-size:15px;line-height:15px;color:#6d6d6d"><span style="letter-spacing:-0.342px">17</span><span style="letter-spacing:-1.167px">.</span><span style="letter-spacing:-0.342px">09</span><span style="letter-spacing:-1.167px">.</span><span style="letter-spacing:-0.342px">2016</span><span style="letter-spacing:-0.167px"> </span><span style="letter-spacing:-0.342px">16</span><span style="letter-spacing:-1.167px">:</span><span style="letter-spacing:-0.342px">13</span></div><div class="t" style="left:971.05px;top:953.20px;font-size:15px;line-height:15px;color:#6d6d6d;letter-spacing:-0.322px">JSON-Datei</div><div class="t" style="left:1173.80px;top:953.20px;font-size:15px;line-height:15px;color:#6d6d6d"><span style="letter-spacing:-0.342px">3</span><span style="letter-spacing:-0.167px"> </span><span style="letter-spacing:-0.755px">KB</span></div><div class="t" style="left:522.30px;top:980.20px;font-size:15px;line-height:15px;color:#000"><span style="letter-spacing:-0.081px">folderTree</span></div><div class="t" style="left:593.80px;top:980.20px;font-size:15px;line-height:15px;color:#000"><span style="letter-spacing:0.005px">(</span><span style="letter-spacing:-0.342px">2016</span><span style="letter-spacing:-2.342px">_</span><span style="letter-spacing:-0.342px">09</span><span style="letter-spacing:-2.342px">_</span><span style="letter-spacing:-0.342px">18</span></div><div class="t" style="left:678.70px;top:980.20px;font-size:15px;line-height:15px;color:#000"><span style="letter-spacing:-0.342px">21</span><span style="letter-spacing:-2.342px">_</span><span style="letter-spacing:-0.342px">12</span><span style="letter-spacing:-2.342px">_</span><span style="letter-spacing:-0.342px">33</span></div><div class="t" style="left:743.00px;top:980.20px;font-size:15px;line-height:15px;color:#000"><span style="letter-spacing:-0.821px">UTC</span><span style="letter-spacing:0.005px">)</span><span style="letter-spacing:-1.167px">.</span><span style="letter-spacing:-0.821px">json</span></div><div class="t" style="left:821.20px;top:980.20px;font-size:15px;line-height:15px;color:#6d6d6d"><span style="letter-spacing:-0.342px">18</span><span style="letter-spacing:-1.167px">.</span><span style="letter-spacing:-0.342px">09</span><span style="letter-spacing:-1.167px">.</span><span style="letter-spacing:-0.342px">2016</span><span style="letter-spacing:-0.167px"> </span><span style="letter-spacing:-0.342px">15</span><span style="letter-spacing:-1.167px">:</span><span style="letter-spacing:-0.342px">43</span></div><div class="t" style="left:971.05px;top:980.20px;font-size:15px;line-height:15px;color:#6d6d6d;letter-spacing:-0.322px">JSON-Datei</div><div class="t" style="left:1173.80px;top:980.20px;font-size:15px;line-height:15px;color:#6d6d6d"><span style="letter-spacing:-0.342px">3</span><span style="letter-spacing:-0.167px"> </span><span style="letter-spacing:-0.755px">KB</span></div></div></div>
<div class="r" style="left:472px;top:218px;width:1428px;height:32px;background:#fff;"></div><div class="r" style="left:813px;top:218px;width:1px;height:32px;background:#e5e5e5;"></div><div class="r" style="left:963px;top:218px;width:1px;height:32px;background:#e5e5e5;"></div><div class="r" style="left:1113px;top:218px;width:1px;height:32px;background:#e5e5e5;"></div><div class="r" style="left:1213px;top:218px;width:1px;height:32px;background:#e5e5e5;"></div><div class="t" style="left:494.30px;top:227.30px;font-size:15px;line-height:15px;color:#4c607a">Name</div><div class="t" style="left:821.30px;top:227.30px;font-size:15px;line-height:15px;color:#4c607a;letter-spacing:-0.023px">Änderungsdatum</div><div class="t" style="left:971.00px;top:227.30px;font-size:15px;line-height:15px;color:#4c607a">Typ</div><div class="t" style="left:1120.60px;top:227.30px;font-size:15px;line-height:15px;color:#4c607a">Größe</div><svg class="i" style="left:645px;top:219px" width="10" height="6" viewBox="0 0 10 6"><path d="M0.5 5.5L5 1L9.5 5.5" fill="none" stroke="#a0a0a0"/></svg>
<div class="r" style="left:1900px;top:218px;width:20px;height:783px;background:#f0f0f0;"></div><div class="r" style="left:1900px;top:413px;width:19px;height:21px;background:#cdcdcd;"></div>
<div class="t" style="left:16.90px;top:1008.30px;font-size:15px;line-height:15px;color:#1e3456"><span style="letter-spacing:-0.342px">2</span><span style="letter-spacing:-0.167px"> </span><span style="letter-spacing:-0.342px">275</span><span style="letter-spacing:-0.167px"> </span><span style="letter-spacing:-0.159px">Elemente</span></div><div class="r" style="left:131px;top:1008px;width:1px;height:14px;background:#e6e6e6;"></div><div class="t" style="left:144.60px;top:1008.30px;font-size:15px;line-height:15px;color:#1e3456"><span style="letter-spacing:-0.342px">1</span><span style="letter-spacing:-0.167px"> </span><span style="letter-spacing:-0.304px">Element</span><span style="letter-spacing:-0.167px"> </span><span style="letter-spacing:-0.304px">ausgewählt</span><span style="letter-spacing:-0.167px"> </span><span style="letter-spacing:0.005px">(</span><span style="letter-spacing:-0.342px">8</span><span style="letter-spacing:-0.304px">,</span><span style="letter-spacing:-0.342px">20</span><span style="letter-spacing:-0.167px"> </span><span style="letter-spacing:-0.304px">KB</span><span style="letter-spacing:0.005px">)</span></div><div class="r" style="left:364px;top:1008px;width:1px;height:14px;background:#e6e6e6;"></div>
<div class="r" style="left:0px;top:1030px;width:1920px;height:50px;background:linear-gradient(90deg,#110a17 0%,#0d0610 30%,#0b0407 60%,#130405 100%);"></div><div class="r" style="left:509px;top:1030px;width:200px;height:50px;background:#3d3539;"></div><div class="r" style="left:251px;top:1077px;width:190px;height:3px;background:#76b9ed;"></div><div class="r" style="left:509px;top:1077px;width:200px;height:3px;background:#76b9ed;"></div><div class="r" style="left:714px;top:1077px;width:190px;height:3px;background:#76b9ed;"></div><div class="t" style="left:291.80px;top:1048.30px;font-size:15px;line-height:15px;color:#fff;letter-spacing:-0.333px">PC kaputt - neuer L...</div><div class="t" style="left:555.00px;top:1048.30px;font-size:15px;line-height:15px;color:#fff;letter-spacing:0.067px">kxut94o7.default</div><div class="t" style="left:755.40px;top:1048.30px;font-size:15px;line-height:15px;color:#fff;letter-spacing:-0.430px">Screenshots</div><div class="t" style="left:1730.20px;top:1048.30px;font-size:15px;line-height:15px;color:#fff;letter-spacing:-0.500px">DEU</div><div class="t" style="left:1792.80px;top:1036.30px;font-size:15px;line-height:15px;color:#fff"><span style="letter-spacing:-0.342px">21</span><span style="letter-spacing:-1.167px">:</span><span style="letter-spacing:-0.342px">11</span></div><div class="t" style="left:1775.60px;top:1058.90px;font-size:15px;line-height:15px;color:#fff"><span style="letter-spacing:-0.342px">04</span><span style="letter-spacing:-1.167px">.</span><span style="letter-spacing:-0.342px">03</span><span style="letter-spacing:-1.167px">.</span><span style="letter-spacing:-0.342px">2017</span></div><div class="r" style="left:1914px;top:1030px;width:1px;height:50px;background:#5a5055;"></div>
<div class="t" style="left:181.60px;top:184.30px;font-size:15px;line-height:15px;color:#000;letter-spacing:-0.612px">Dieser PC</div><div class="t" style="left:271.30px;top:184.30px;font-size:15px;line-height:15px;color:#000;letter-spacing:-0.475px">DRIVE-N-GO (G:)</div><div class="t" style="left:410.05px;top:184.30px;font-size:15px;line-height:15px;color:#000;letter-spacing:-0.035px">FileHistory</div><div class="t" style="left:507.55px;top:184.30px;font-size:15px;line-height:15px;color:#000;letter-spacing:0.050px">Daniela</div><div class="t" style="left:585.80px;top:184.30px;font-size:15px;line-height:15px;color:#000;letter-spacing:-0.625px">DANIELA</div><div class="t" style="left:673.80px;top:184.30px;font-size:15px;line-height:15px;color:#000">Data</div><div class="t" style="left:732.30px;top:184.30px;font-size:15px;line-height:15px;color:#000">C</div><div class="t" style="left:768.40px;top:184.30px;font-size:15px;line-height:15px;color:#000;letter-spacing:-0.838px">Users</div><div class="t" style="left:830.55px;top:184.30px;font-size:15px;line-height:15px;color:#000;letter-spacing:-0.033px">Daniela</div><div class="t" style="left:909.50px;top:184.30px;font-size:15px;line-height:15px;color:#000;letter-spacing:0.058px">AppData</div><div class="t" style="left:995.05px;top:184.30px;font-size:15px;line-height:15px;color:#000;letter-spacing:0.225px">Roaming</div><div class="t" style="left:1083.20px;top:184.30px;font-size:15px;line-height:15px;color:#000;letter-spacing:0.040px">Thunderbird</div><div class="t" style="left:1190.05px;top:184.30px;font-size:15px;line-height:15px;color:#000;letter-spacing:0.014px">Profiles</div><div class="t" style="left:1266.20px;top:184.30px;font-size:15px;line-height:15px;color:#000;letter-spacing:0.047px">kxut94o7.default</div><svg id="ov" width="1920" height="1080" viewBox="0 0 1920 1080" style="position:absolute;left:0;top:0"><defs><linearGradient id="fb" x1="0" y1="0" x2="1" y2="0"><stop offset="0" stop-color="#e9bd4c"/><stop offset="0.4" stop-color="#f3cd68"/><stop offset="1" stop-color="#fbdb80"/></linearGradient><linearGradient id="ff" x1="0" y1="0" x2="1" y2="0"><stop offset="0" stop-color="#fde7a6"/><stop offset="1" stop-color="#fbe092"/></linearGradient><linearGradient id="fbig" x1="0" y1="0" x2="0" y2="1"><stop offset="0" stop-color="#ffe69a"/><stop offset="1" stop-color="#fcd97a"/></linearGradient><linearGradient id="docg" x1="0" y1="0" x2="1" y2="1"><stop offset="0" stop-color="#f3f3f3"/><stop offset="1" stop-color="#f9fafb"/></linearGradient><clipPath id="navclip"><rect x="0" y="218" width="449" height="783"/></clipPath><clipPath id="listclip"><rect x="472" y="250" width="1428" height="751"/></clipPath></defs><g transform="translate(3,6) scale(1.0000,1.0000)"><path d="M1 0H11V9.5H12V14.6H1Z" fill="url(#fb)"/><path d="M0 0L4 2.6V17L0 14.6Z" fill="url(#ff)"/></g><rect x="26" y="7" width="1" height="16" fill="#8c8c8c"/><path d="M42.5 6.5H51.5L55.5 10.5V23.5H42.5Z" fill="#f7f8fa" stroke="#7d7d7d" stroke-width="1"/><path d="M51.5 6.5V10.5H55.5" fill="#eee" stroke="#7d7d7d" stroke-width="1"/><path d="M44.3 15.3L47.5 18.6L53.8 12.2" fill="none" stroke="#ea560f" stroke-width="1.8"/><g transform="translate(68,7) scale(1.0000,1.0000)"><path d="M1 0H11V9.5H12V14.6H1Z" fill="url(#fb)"/><path d="M0 0L4 2.6V17L0 14.6Z" fill="url(#ff)"/></g><path d="M97.8 12.3 Q100 8.2 103.8 8.4 Q107.8 8.8 107.8 13 Q107.6 15.8 104.5 19 L99.8 23.6" fill="none" stroke="#a3b5cf" stroke-width="2.7"/><path d="M93.1 6.3 V14 H100.6Z" fill="#a3b5cf"/><rect x="119" y="13" width="7" height="1.2" fill="#000"/><path d="M119.7 16.2H125.6L122.65 19Z" fill="#000"/><rect x="139" y="7" width="1" height="16" fill="#8c8c8c"/><rect x="1765" y="13" width="12" height="1" fill="#000"/><rect x="1823.5" y="10.5" width="9" height="9" fill="none" stroke="#000"/><path d="M1825.5 10.5V8.5H1834.5V17.5H1832.5" fill="none" stroke="#000"/><path d="M1882 8L1894 20M1894 8L1882 20" stroke="#000" stroke-width="1.1"/><path d="M1875 46L1881 40L1887 46" fill="none" stroke="#9a9a9a" stroke-width="1.1"/><circle cx="1907" cy="43" r="9" fill="#0e6fd1"/><text x="1907" y="48.5" font-size="15" font-family="Liberation Sans" fill="#fff" text-anchor="middle">?</text><path transform="translate(44,72) scale(1) translate(-4,-9.5)" d="M21.5 10 L30 18.3 L25.8 20.8 L20.8 25.4 L20.4 30 L18.3 32.9 L13.3 28.75 L5.4 35.8 Q4 35.5 4.2 34.6 L11.25 26.7 L6.9 21.5 L10.4 19.2 L15 19.2 L19.2 14.6 L19.2 12.5Z" fill="#b0c1d6"/><path d="M122.5 67.5H136.5L141.5 72.5V93.5H122.5Z" fill="#fff" stroke="#8a8a8a" stroke-width="1"/><path d="M136.5 67.5V72.5H141.5" fill="#eee" stroke="#8a8a8a" stroke-width="1"/><rect x="124.5" y="71.5" width="11" height="1.2" fill="#a9ccf6"/><rect x="124.5" y="74.5" width="15.5" height="1.2" fill="#a9ccf6"/><rect x="124.5" y="77.5" width="15.5" height="1.2" fill="#a9ccf6"/><rect x="124.5" y="80.5" width="15.5" height="1.2" fill="#a9ccf6"/><rect x="124.5" y="83.5" width="15.5" height="1.2" fill="#a9ccf6"/><rect x="124.5" y="86.5" width="15.5" height="1.2" fill="#a9ccf6"/><rect x="124.5" y="89.5" width="15.5" height="1.2" fill="#a9ccf6"/><path d="M132.5 76.5H146.5L151.5 81.5V102.5H132.5Z" fill="#fff" stroke="#8a8a8a" stroke-width="1"/><path d="M146.5 76.5V81.5H151.5" fill="#eee" stroke="#8a8a8a" stroke-width="1"/><rect x="134.5" y="80.5" width="11" height="1.3" fill="#4a90e8"/><rect x="134.5" y="83.5" width="15.5" height="1.3" fill="#4a90e8"/><rect x="134.5" y="86.5" width="15.5" height="1.3" fill="#4a90e8"/><rect x="134.5" y="89.5" width="15.5" height="1.3" fill="#4a90e8"/><rect x="134.5" y="92.5" width="15.5" height="1.3" fill="#4a90e8"/><rect x="134.5" y="95.5" width="15.5" height="1.3" fill="#4a90e8"/><rect x="134.5" y="98.5" width="15.5" height="1.3" fill="#4a90e8"/><rect x="180.5" y="69.5" width="25" height="32.5" rx="2" fill="#8ea2c1"/><rect x="183" y="73" width="20" height="26.5" fill="#eaf1fb"/><rect x="183" y="76" width="20" height="0.7" fill="#cdd8ea"/><rect x="183" y="79" width="20" height="0.7" fill="#cdd8ea"/><rect x="183" y="82" width="20" height="0.7" fill="#cdd8ea"/><rect x="183" y="85" width="20" height="0.7" fill="#cdd8ea"/><rect x="183" y="88" width="20" height="0.7" fill="#cdd8ea"/><rect x="183" y="91" width="20" height="0.7" fill="#cdd8ea"/><rect x="183" y="94" width="20" height="0.7" fill="#cdd8ea"/><rect x="183" y="97" width="20" height="0.7" fill="#cdd8ea"/><path d="M187 74H199L197 71H189Z" fill="#a8b8d2"/><rect x="191" y="66" width="4" height="5" rx="1.5" fill="#a8b8d2"/><path d="M230.2 66.3L234 75.2L237.8 66.3" fill="none" stroke="#8d8d8d" stroke-width="1.3"/><path d="M234 75.2L232 77.5M234 75.2L236 77.5" stroke="#1f89d6" stroke-width="1.4"/><ellipse cx="230.4" cy="80.6" rx="2.3" ry="3.3" transform="rotate(25 230.4 80.6)" fill="none" stroke="#1f89d6" stroke-width="1.7"/><ellipse cx="237.6" cy="80.6" rx="2.3" ry="3.3" transform="rotate(-25 237.6 80.6)" fill="none" stroke="#1f89d6" stroke-width="1.7"/><rect x="225.5" y="96.5" width="17" height="10" fill="#c5e1f8" stroke="#86b8e4"/><path d="M227.5 99L230 104.5M229.8 99L232.3 104.5" stroke="#000" stroke-width="1"/><rect x="233" y="103.5" width="1" height="1" fill="#000"/><rect x="235" y="103.5" width="1" height="1" fill="#000"/><rect x="237" y="103.5" width="1" height="1" fill="#000"/><rect x="227" y="119" width="14" height="17" fill="#8ea2c1"/><rect x="229" y="121" width="10" height="13" fill="#e6eef9"/><path d="M230 121H238L236.5 119H231.5Z" fill="#a8b8d2"/><rect x="233" y="117" width="2" height="2" fill="#a8b8d2"/><path d="M231.5 132 Q231.5 127 236 126.5 V125 L238.5 127.5 L236 130 V128.5 Q233 128.8 231.5 132Z" fill="#7c93b7"/><rect x="414.5" y="67.5" width="26.5" height="35" fill="url(#fbig)" stroke="#eec24c"/><rect x="416.5" y="69" width="1" height="32" fill="#fff2c4"/><rect x="438" y="69" width="1" height="32" fill="#fff2c4"/><rect x="441" y="89" width="2" height="13.5" fill="#f6ce5f"/><path d="M426.3 94L435.6 84.4V90.3H446V97.5H435.6V103.8Z" fill="#3b97e3" stroke="#2f7fc4" stroke-width="0.6"/><rect x="481.5" y="67.5" width="28.5" height="35" fill="url(#fbig)" stroke="#eec24c"/><rect x="483.5" y="69" width="1" height="32" fill="#fff2c4"/><rect x="505" y="90" width="4.5" height="12.5" rx="2" fill="#f6ce5f"/><path d="M494.5 65.5H502.5L505.5 68.5V84.5H494.5Z" fill="#fff" stroke="#8a8a8a" stroke-width="1"/><path d="M502.5 65.5V68.5H505.5" fill="#eee" stroke="#8a8a8a" stroke-width="1"/><rect x="496" y="69.5" width="4" height="0.9" fill="#a9ccf6"/><rect x="496" y="71.5" width="4" height="0.9" fill="#a9ccf6"/><rect x="496" y="73.5" width="4" height="0.9" fill="#a9ccf6"/><rect x="496" y="75.5" width="4" height="0.9" fill="#a9ccf6"/><rect x="496" y="77.5" width="4" height="0.9" fill="#a9ccf6"/><rect x="496" y="79.5" width="4" height="0.9" fill="#a9ccf6"/><rect x="496" y="81.5" width="4" height="0.9" fill="#a9ccf6"/><path d="M500.0 69.5H510.0L513.5 73.0V88.5H500.0Z" fill="#fff" stroke="#8a8a8a" stroke-width="1"/><path d="M510.0 69.5V73.0H513.5" fill="#eee" stroke="#8a8a8a" stroke-width="1"/><rect x="501.5" y="73.5" width="7" height="1.1" fill="#4a90e8"/><rect x="501.5" y="75.5" width="11" height="1.1" fill="#4a90e8"/><rect x="501.5" y="77.5" width="11" height="1.1" fill="#4a90e8"/><rect x="501.5" y="79.5" width="11" height="1.1" fill="#4a90e8"/><rect x="501.5" y="81.5" width="11" height="1.1" fill="#4a90e8"/><rect x="501.5" y="83.5" width="11" height="1.1" fill="#4a90e8"/><rect x="501.5" y="85.5" width="11" height="1.1" fill="#4a90e8"/><path d="M544.5 72.3L569.6 97.7M569.6 72.3L544.5 97.7" stroke="#e1001a" stroke-width="5.2"/><rect x="606.5" y="77.5" width="35" height="14" fill="#fff" stroke="#7a7a7a"/><rect x="609" y="80" width="18" height="8.8" fill="#3c97e6"/><path d="M633.75 70 V99" stroke="#636363" stroke-width="1.6"/><path d="M628 69 Q633.75 68 633.75 72 Q633.75 68 640 69 M628 100 Q633.75 101 633.75 97 Q633.75 101 640 100" fill="none" stroke="#636363" stroke-width="1.5"/><g transform="translate(689,69) scale(1.9167,2.0294)"><path d="M1 0H11V9.5H12V14.6H1Z" fill="url(#fb)"/><path d="M0 0L4 2.6V17L0 14.6Z" fill="url(#ff)"/></g><rect x="731.5" y="66.5" width="12" height="9" fill="#cfe6fb" stroke="#3b86c6"/><rect x="734" y="69" width="2" height="5" fill="#4a9a5a"/><path d="M736.5 70.5H743L745.5 73V80.5H736.5Z" fill="#f2f2f2" stroke="#888"/><path d="M740.5 74.5H747.5L749.5 76.5V84.5H740.5Z" fill="#fff" stroke="#888"/><rect x="741" y="77" width="8" height="0.8" fill="#9fc4ee"/><rect x="741" y="79" width="8" height="0.8" fill="#9fc4ee"/><rect x="741" y="81" width="8" height="0.8" fill="#9fc4ee"/><rect x="742.3" y="75" width="0.6" height="9.3" fill="#f3a0a0"/><path d="M733.5 92.5H743.0L746.5 96.0V109.5H733.5Z" fill="#fff" stroke="#8a8a8a" stroke-width="1"/><path d="M743.0 92.5V96.0H746.5" fill="#eee" stroke="#8a8a8a" stroke-width="1"/><path d="M732.5 95.5H737M731.5 97.5H736M730.5 99.5H735" stroke="#0b5fb0" stroke-width="1"/><path d="M438.6 132.5H445.0L441.8 135.7Z" fill="#000"/><path d="M506.3 132.5H512.7L509.5 135.7Z" fill="#000"/><path d="M553 132.5H559.4L556.2 135.7Z" fill="#000"/><path d="M844.8 73.5H851.1999999999999L848.0 76.7Z" fill="#000"/><path d="M852.7 99.5H859.1L855.9000000000001 102.7Z" fill="#000"/><path d="M913.9 131H920.3L917.1 134.2Z" fill="#000"/><path d="M1030.8 74.5H1037.2L1034.0 77.7Z" fill="#000"/><path d="M903.5 67.5H923.5L930.5 74.5V102.5H903.5Z" fill="#fafafa" stroke="#7d7d7d" stroke-width="1"/><path d="M923.5 67.5V74.5H930.5" fill="#eee" stroke="#7d7d7d" stroke-width="1"/><path d="M907.2 87.1L913.9 93.6L926.9 79.7" fill="none" stroke="#ea5b0c" stroke-width="3.2"/><path d="M966.0 69.0H976.5L979.5 72.0V85.5H966.0Z" fill="#fafafa" stroke="#b9b9b9" stroke-width="1"/><path d="M976.5 69.0V72.0H979.5" fill="#eee" stroke="#b9b9b9" stroke-width="1"/><path d="M968.5 78.3H974.5" stroke="#17b31f" stroke-width="2"/><path d="M972.5 74.8L976.5 78.3L972.5 81.8" fill="none" stroke="#17b31f" stroke-width="2"/><path d="M966.5 94.5H976.5L979.5 97.5V111.5H966.5Z" fill="#e4ecf8" stroke="#a9bcd8" stroke-width="1"/><path d="M976.5 94.5V97.5H979.5" fill="#eee" stroke="#a9bcd8" stroke-width="1"/><path d="M968.5 110L982 96.5" stroke="#a9bcd8" stroke-width="1.8"/><g transform="translate(966,122) scale(0.9167,0.9706)"><path d="M1 0H11V9.5H12V14.6H1Z" fill="url(#fb)"/><path d="M0 0L4 2.6V17L0 14.6Z" fill="url(#ff)"/></g><circle cx="978.5" cy="134.5" r="5.3" fill="#f4f4f4" stroke="#8a8a8a" stroke-width="1.1"/><path d="M978.5 131.5V134.5L980.5 133" fill="none" stroke="#666" stroke-width="0.8"/><path d="M970.5 134 Q972 130 976 130.5" fill="none" stroke="#2bb030" stroke-width="1.8"/><path d="M969 132.5L971 137L973.5 133Z" fill="#2bb030"/><rect x="1068.5" y="66.5" width="8.2" height="8.2" fill="#bcdcf8" stroke="#3b98ea" stroke-width="1.4"/><rect x="1077.5" y="66.5" width="8.2" height="8.2" fill="#bcdcf8" stroke="#3b98ea" stroke-width="1.4"/><rect x="1068.5" y="75" width="8.2" height="8.2" fill="#bcdcf8" stroke="#3b98ea" stroke-width="1.4"/><rect x="1077.5" y="75" width="8.2" height="8.2" fill="#bcdcf8" stroke="#3b98ea" stroke-width="1.4"/><rect x="1069.5" y="93.5" width="6.5" height="6.5" fill="#f0f0f0" stroke="#a8a8a8" stroke-width="1.1"/><rect x="1078.5" y="93.5" width="6.5" height="6.5" fill="#f0f0f0" stroke="#a8a8a8" stroke-width="1.1"/><rect x="1069.5" y="102" width="6.5" height="6.5" fill="#f0f0f0" stroke="#a8a8a8" stroke-width="1.1"/><rect x="1078.5" y="102" width="6.5" height="6.5" fill="#f0f0f0" stroke="#a8a8a8" stroke-width="1.1"/><rect x="1069.5" y="119.5" width="6.5" height="6.5" fill="#f0f0f0" stroke="#a8a8a8" stroke-width="1.1"/><rect x="1078.5" y="128.5" width="6.5" height="6.5" fill="#f0f0f0" stroke="#a8a8a8" stroke-width="1.1"/><rect x="1077.5" y="118.5" width="8.2" height="8.2" fill="#bcdcf8" stroke="#3b98ea" stroke-width="1.4"/><rect x="1068.5" y="127.5" width="8.2" height="8.2" fill="#bcdcf8" stroke="#3b98ea" stroke-width="1.4"/><path d="M17 192.8H31M22 187.8L17 192.8L22 197.8" fill="none" stroke="#6b6b6b" stroke-width="1.7"/><path d="M55 192.7H70M64.5 187.2L70 192.7L64.5 198.2" fill="none" stroke="#c8c8c8" stroke-width="1.3"/><path d="M88.5 190.5L92.5 194.5L96.5 190.5" fill="none" stroke="#6d6d6d" stroke-width="1.2"/><path d="M118 187.3V201M112.7 192.5L118 187.3L123.3 192.5" fill="none" stroke="#6b6b6b" stroke-width="1.6"/><g transform="translate(140,183) scale(1.0000,1.0000)"><path d="M1 0H11V9.5H12V14.6H1Z" fill="url(#fb)"/><path d="M0 0L4 2.6V17L0 14.6Z" fill="url(#ff)"/></g><path d="M165.9 187.5L169.9 191.3L165.9 195.1" fill="none" stroke="#707070" stroke-width="1.2"/><path d="M256.55 187.5L260.55 191.3L256.55 195.1" fill="none" stroke="#707070" stroke-width="1.2"/><path d="M395.3 187.5L399.3 191.3L395.3 195.1" fill="none" stroke="#707070" stroke-width="1.2"/><path d="M492.8 187.5L496.8 191.3L492.8 195.1" fill="none" stroke="#707070" stroke-width="1.2"/><path d="M570.3 187.5L574.3 191.3L570.3 195.1" fill="none" stroke="#707070" stroke-width="1.2"/><path d="M658.3 187.5L662.3 191.3L658.3 195.1" fill="none" stroke="#707070" stroke-width="1.2"/><path d="M716.55 187.5L720.55 191.3L716.55 195.1" fill="none" stroke="#707070" stroke-width="1.2"/><path d="M754.05 187.5L758.05 191.3L754.05 195.1" fill="none" stroke="#707070" stroke-width="1.2"/><path d="M815.3 187.5L819.3 191.3L815.3 195.1" fill="none" stroke="#707070" stroke-width="1.2"/><path d="M894.05 187.5L898.05 191.3L894.05 195.1" fill="none" stroke="#707070" stroke-width="1.2"/><path d="M980.3 187.5L984.3 191.3L980.3 195.1" fill="none" stroke="#707070" stroke-width="1.2"/><path d="M1067.8 187.5L1071.8 191.3L1067.8 195.1" fill="none" stroke="#707070" stroke-width="1.2"/><path d="M1174.7 187.5L1178.7 191.3L1174.7 195.1" fill="none" stroke="#707070" stroke-width="1.2"/><path d="M1250.6 187.5L1254.6 191.3L1250.6 195.1" fill="none" stroke="#707070" stroke-width="1.2"/><path d="M1602 191L1607 196L1612 191" fill="none" stroke="#6d6d6d" stroke-width="1.3"/><path d="M1628.5 187.2 A6.3 6.3 0 1 0 1636 189.5" fill="none" stroke="#6d6d6d" stroke-width="1.3"/><path d="M1625.5 186.2L1630.5 186.2L1629.5 191Z" fill="#6d6d6d"/><circle cx="1891" cy="191.5" r="4.3" fill="none" stroke="#5a5a5a" stroke-width="1.3"/><path d="M1888 194.5L1882.5 200" stroke="#5a5a5a" stroke-width="1.6"/><path d="M454 231.5L458.7 226.3L463.4 231.5" fill="none" stroke="#505050" stroke-width="1.9"/><path d="M454 987L459 992L464 987" fill="none" stroke="#606060" stroke-width="1.6"/><path d="M1905.2 231.5L1909.8 226.5L1914.4 231.5" fill="none" stroke="#606060" stroke-width="1.6"/><path d="M1905.2 987L1909.8 992L1914.4 987" fill="none" stroke="#606060" stroke-width="1.6"/><g clip-path="url(#navclip)"><path transform="translate(40.5,243.5) scale(0.95)" d="M0 -8.3L2.2 -2.8L8.3 -2.6L3.5 1.2L5.2 7.3L0 3.9L-5.2 7.3L-3.5 1.2L-8.3 -2.6L-2.2 -2.8Z" fill="#2b8ee0"/><path d="M31.5 241.5H35M32 244.5H35.5M32.8 247.5H36" stroke="#9cc7ef" stroke-width="0.9"/><g transform="translate(43,265.0) scale(0.9583,1.0000)"><path d="M1 0H11V9.5H12V14.6H1Z" fill="url(#fb)"/><path d="M0 0L4 2.6V17L0 14.6Z" fill="url(#ff)"/></g><rect x="49" y="273.0" width="10.5" height="7" fill="#2196f3"/><rect x="49" y="278.5" width="10.5" height="1.6" fill="#1565b8"/><path transform="translate(431.7,266.8) scale(0.48) translate(-4,-9.5)" d="M21.5 10 L30 18.3 L25.8 20.8 L20.8 25.4 L20.4 30 L18.3 32.9 L13.3 28.75 L5.4 35.8 Q4 35.5 4.2 34.6 L11.25 26.7 L6.9 21.5 L10.4 19.2 L15 19.2 L19.2 14.6 L19.2 12.5Z" fill="#8e9aa3"/><g transform="translate(43,295.0) scale(0.9583,1.0000)"><path d="M1 0H11V9.5H12V14.6H1Z" fill="url(#fb)"/><path d="M0 0L4 2.6V17L0 14.6Z" fill="url(#ff)"/></g><path d="M52 302.5H56V306.5H58.5L54 311.5L49.5 306.5H52Z" fill="#3d8fe0"/><path transform="translate(431.7,296.8) scale(0.48) translate(-4,-9.5)" d="M21.5 10 L30 18.3 L25.8 20.8 L20.8 25.4 L20.4 30 L18.3 32.9 L13.3 28.75 L5.4 35.8 Q4 35.5 4.2 34.6 L11.25 26.7 L6.9 21.5 L10.4 19.2 L15 19.2 L19.2 14.6 L19.2 12.5Z" fill="#8e9aa3"/><g transform="translate(43,325.0) scale(0.9583,1.0000)"><path d="M1 0H11V9.5H12V14.6H1Z" fill="url(#fb)"/><path d="M0 0L4 2.6V17L0 14.6Z" fill="url(#ff)"/></g><path d="M49.0 328.5H56.0L59.0 331.5V342.5H49.0Z" fill="#fff" stroke="#808080" stroke-width="1"/><path d="M56.0 328.5V331.5H59.0" fill="#eee" stroke="#808080" stroke-width="1"/><rect x="50.5" y="334.5" width="7" height="1.2" fill="#1a7bd6"/><rect x="50.5" y="336.5" width="2" height="1" fill="#aaa"/><rect x="53" y="336.5" width="4" height="1" fill="#5a9cf0"/><rect x="50.5" y="338.5" width="2" height="1" fill="#aaa"/><rect x="53" y="338.5" width="4" height="1" fill="#3d6b45"/><path d="M50.5 333.5L52.5 330.0L53.5 333.5" fill="none" stroke="#2a8fe0" stroke-width="0.9"/><path transform="translate(431.7,326.8) scale(0.48) translate(-4,-9.5)" d="M21.5 10 L30 18.3 L25.8 20.8 L20.8 25.4 L20.4 30 L18.3 32.9 L13.3 28.75 L5.4 35.8 Q4 35.5 4.2 34.6 L11.25 26.7 L6.9 21.5 L10.4 19.2 L15 19.2 L19.2 14.6 L19.2 12.5Z" fill="#8e9aa3"/><g transform="translate(43,355.0) scale(0.9583,1.0000)"><path d="M1 0H11V9.5H12V14.6H1Z" fill="url(#fb)"/><path d="M0 0L4 2.6V17L0 14.6Z" fill="url(#ff)"/></g><path transform="translate(431.7,356.8) scale(0.48) translate(-4,-9.5)" d="M21.5 10 L30 18.3 L25.8 20.8 L20.8 25.4 L20.4 30 L18.3 32.9 L13.3 28.75 L5.4 35.8 Q4 35.5 4.2 34.6 L11.25 26.7 L6.9 21.5 L10.4 19.2 L15 19.2 L19.2 14.6 L19.2 12.5Z" fill="#8e9aa3"/><g transform="translate(43,385.0) scale(0.9583,1.0000)"><path d="M1 0H11V9.5H12V14.6H1Z" fill="url(#fb)"/><path d="M0 0L4 2.6V17L0 14.6Z" fill="url(#ff)"/></g><rect x="48.5" y="393.0" width="11" height="8" fill="#fff" stroke="#888"/><rect x="50" y="394.5" width="8" height="5" fill="#6fa3d8"/><path d="M50 398.0Q53 396.0 58 398.0V399.5H50Z" fill="#3d6b45"/><path transform="translate(431.7,386.8) scale(0.48) translate(-4,-9.5)" d="M21.5 10 L30 18.3 L25.8 20.8 L20.8 25.4 L20.4 30 L18.3 32.9 L13.3 28.75 L5.4 35.8 Q4 35.5 4.2 34.6 L11.25 26.7 L6.9 21.5 L10.4 19.2 L15 19.2 L19.2 14.6 L19.2 12.5Z" fill="#8e9aa3"/><g transform="translate(43,415.0) scale(0.9583,1.0000)"><path d="M1 0H11V9.5H12V14.6H1Z" fill="url(#fb)"/><path d="M0 0L4 2.6V17L0 14.6Z" fill="url(#ff)"/></g><path transform="translate(431.7,416.8) scale(0.48) translate(-4,-9.5)" d="M21.5 10 L30 18.3 L25.8 20.8 L20.8 25.4 L20.4 30 L18.3 32.9 L13.3 28.75 L5.4 35.8 Q4 35.5 4.2 34.6 L11.25 26.7 L6.9 21.5 L10.4 19.2 L15 19.2 L19.2 14.6 L19.2 12.5Z" fill="#8e9aa3"/><g transform="translate(43,445.0) scale(0.9583,1.0000)"><path d="M1 0H11V9.5H12V14.6H1Z" fill="url(#fb)"/><path d="M0 0L4 2.6V17L0 14.6Z" fill="url(#ff)"/></g><circle cx="45.5" cy="456.5" r="5.5" fill="#52c23f"/><path d="M42.475 456.775L44.84 459.25L48.8 454.025" fill="none" stroke="#fff" stroke-width="1.76"/><g transform="translate(43,475.0) scale(0.9583,1.0000)"><path d="M1 0H11V9.5H12V14.6H1Z" fill="url(#fb)"/><path d="M0 0L4 2.6V17L0 14.6Z" fill="url(#ff)"/></g><path d="M52.5 478.5V488.5" stroke="#1a8ee8" stroke-width="1.6"/><ellipse cx="50.5" cy="489.0" rx="3" ry="2.5" fill="#1a8ee8"/><path d="M52.5 478.5Q57 482.5 56.5 486.5" fill="none" stroke="#1a8ee8" stroke-width="1.5"/><g transform="translate(43,505.0) scale(0.9583,1.0000)"><path d="M1 0H11V9.5H12V14.6H1Z" fill="url(#fb)"/><path d="M0 0L4 2.6V17L0 14.6Z" fill="url(#ff)"/></g><circle cx="45.5" cy="516.5" r="5.5" fill="#52c23f"/><path d="M42.475 516.775L44.84 519.25L48.8 514.025" fill="none" stroke="#fff" stroke-width="1.76"/><g transform="translate(43,535.0) scale(0.9583,1.0000)"><path d="M1 0H11V9.5H12V14.6H1Z" fill="url(#fb)"/><path d="M0 0L4 2.6V17L0 14.6Z" fill="url(#ff)"/></g><rect x="31" y="577.0" width="18" height="13" fill="#2196f3"/><path d="M31 577.0H49V587.5H31Z" fill="#3aa5f7"/><rect x="31" y="587.5" width="18" height="2.5" fill="#1565b8"/><g fill="#0f78d4"><circle cx="45.8" cy="610.3" r="3.1"/><rect x="42.8" y="610.3" width="7" height="7.3"/></g><g fill="#fff" stroke="#fff" stroke-width="1.4"><circle cx="51.6" cy="609.5" r="3.6"/><circle cx="56" cy="614.4" r="3.2"/><rect x="48" y="609.5" width="8" height="8.1"/><circle cx="48.6" cy="615.0" r="2.6"/></g><g fill="#0f78d4"><circle cx="51.6" cy="609.5" r="3.6"/><circle cx="56" cy="614.4" r="3.2"/><rect x="48" y="609.5" width="8" height="8.1"/><circle cx="48.6" cy="615.0" r="2.6"/></g><circle cx="46" cy="617.0" r="5.4" fill="#52c23f"/><path d="M43.03 617.27L45.352 619.7L49.24 614.57" fill="none" stroke="#fff" stroke-width="1.73"/><g transform="translate(43,635.0) scale(0.9167,1.0000)"><path d="M1 0H11V9.5H12V14.6H1Z" fill="url(#fb)"/><path d="M0 0L4 2.6V17L0 14.6Z" fill="url(#ff)"/></g><path d="M48 652.5 Q48 646.5 53 646.5 Q59 646.5 59 652.5Z" fill="#4a8d5e"/><circle cx="53.2" cy="643.5" r="3.4" fill="#c8966a"/><path d="M49.8 643.0 Q50 639.0 53.2 639.5 Q56.5 639.0 56.6 643.0 Q55 641.0 53 641.5 Q51 641.0 49.8 643.0Z" fill="#2c2c2c"/><path d="M47 666.0L60 668.0V676.5L47 676.0Z" fill="#2ea0f5"/><rect x="52" y="676.5" width="3" height="1.5" fill="#9a9a9a"/><path d="M44 678.5L54 678.0L55 681.0L41.5 681.5Z" fill="#d6d6d6"/><g transform="translate(53,695.0) scale(0.9583,1.0000)"><path d="M1 0H11V9.5H12V14.6H1Z" fill="url(#fb)"/><path d="M0 0L4 2.6V17L0 14.6Z" fill="url(#ff)"/></g><rect x="58.5" y="703.0" width="11" height="8" fill="#fff" stroke="#888"/><rect x="60" y="704.5" width="8" height="5" fill="#6fa3d8"/><path d="M60 708.0Q63 706.0 68 708.0V709.5H60Z" fill="#3d6b45"/><g transform="translate(53,725.0) scale(0.9583,1.0000)"><path d="M1 0H11V9.5H12V14.6H1Z" fill="url(#fb)"/><path d="M0 0L4 2.6V17L0 14.6Z" fill="url(#ff)"/></g><rect x="59" y="733.0" width="10.5" height="7" fill="#2196f3"/><rect x="59" y="738.5" width="10.5" height="1.6" fill="#1565b8"/><g transform="translate(53,755.0) scale(0.9583,1.0000)"><path d="M1 0H11V9.5H12V14.6H1Z" fill="url(#fb)"/><path d="M0 0L4 2.6V17L0 14.6Z" fill="url(#ff)"/></g><path d="M59.0 758.5H66.0L69.0 761.5V772.5H59.0Z" fill="#fff" stroke="#808080" stroke-width="1"/><path d="M66.0 758.5V761.5H69.0" fill="#eee" stroke="#808080" stroke-width="1"/><rect x="60.5" y="764.5" width="7" height="1.2" fill="#1a7bd6"/><rect x="60.5" y="766.5" width="2" height="1" fill="#aaa"/><rect x="63" y="766.5" width="4" height="1" fill="#5a9cf0"/><rect x="60.5" y="768.5" width="2" height="1" fill="#aaa"/><rect x="63" y="768.5" width="4" height="1" fill="#3d6b45"/><path d="M60.5 763.5L62.5 760.0L63.5 763.5" fill="none" stroke="#2a8fe0" stroke-width="0.9"/><g transform="translate(53,785.0) scale(0.9583,1.0000)"><path d="M1 0H11V9.5H12V14.6H1Z" fill="url(#fb)"/><path d="M0 0L4 2.6V17L0 14.6Z" fill="url(#ff)"/></g><path d="M62 792.5H66V796.5H68.5L64 801.5L59.5 796.5H62Z" fill="#3d8fe0"/><g transform="translate(53,815.0) scale(0.9583,1.0000)"><path d="M1 0H11V9.5H12V14.6H1Z" fill="url(#fb)"/><path d="M0 0L4 2.6V17L0 14.6Z" fill="url(#ff)"/></g><path d="M62.5 818.5V828.5" stroke="#1a8ee8" stroke-width="1.6"/><ellipse cx="60.5" cy="829.0" rx="3" ry="2.5" fill="#1a8ee8"/><path d="M62.5 818.5Q67 822.5 66.5 826.5" fill="none" stroke="#1a8ee8" stroke-width="1.5"/><g transform="translate(53,845.0) scale(0.9583,1.0000)"><path d="M1 0H11V9.5H12V14.6H1Z" fill="url(#fb)"/><path d="M0 0L4 2.6V17L0 14.6Z" fill="url(#ff)"/></g><rect x="59" y="849.5" width="9" height="12" fill="#222"/><rect x="61" y="850.5" width="5" height="4.5" fill="#6a9bd3"/><rect x="61" y="856.0" width="5" height="4.5" fill="#d0a04a"/><path d="M50 877.0H53.6V880.5H50Z M54.4 876.5H58.2V880.5H54.4Z M50 881.3H53.6V884.8H50Z M54.4 881.3H58.2V885.3H54.4Z" fill="#1aa7ec"/><path d="M51 886.0999999999999L59.5 882.8L69 885.0999999999999L60 888.4Z" fill="#e4e5e8"/><path d="M51 886.0999999999999L60 888.4V891.5L51 889.8Z" fill="#2a2a2a"/><path d="M60 888.4L69 885.0999999999999V888.6999999999999L60 891.5Z" fill="#b4b5b8"/><circle cx="57.5" cy="889.6999999999999" r="0.9" fill="#2fbf3a"/><circle cx="62.7" cy="909.4" r="5.5" fill="#d9d9d9" stroke="#a5a5a5" stroke-width="0.8"/><circle cx="62.7" cy="909.4" r="1.6" fill="#fff" stroke="#a5a5a5" stroke-width="0.6"/><path d="M51 917.1999999999999L59.5 913.9L69 916.1999999999999L60 919.5Z" fill="#e4e5e8"/><path d="M51 917.1999999999999L60 919.5V922.6L51 920.9Z" fill="#2a2a2a"/><path d="M60 919.5L69 916.1999999999999V919.8L60 922.6Z" fill="#b4b5b8"/><circle cx="57.5" cy="920.8" r="0.9" fill="#2fbf3a"/><path d="M51 946.0L59.5 942.7L69 945.0L60 948.3000000000001Z" fill="#e4e5e8"/><path d="M51 946.0L60 948.3000000000001V951.4000000000001L51 949.7Z" fill="#2a2a2a"/><path d="M60 948.3000000000001L69 945.0V948.6L60 951.4000000000001Z" fill="#b4b5b8"/><circle cx="57.5" cy="949.6" r="0.9" fill="#2fbf3a"/><path d="M41 966.5H47L48.5 968.0H58.8V981.5H41Z" fill="#fde08b"/><path d="M41 966.5H47L48.5 968.0H41Z" fill="#f5c65a"/><path d="M44.5 981.5V974.5 H55.5V981.5H53V977.0H47V981.5Z" fill="#2d9bf0"/><path d="M41 1006.0L49.5 1002.7L59 1005.0L50 1008.3000000000001Z" fill="#e4e5e8"/><path d="M41 1006.0L50 1008.3000000000001V1011.4000000000001L41 1009.7Z" fill="#2a2a2a"/><path d="M50 1008.3000000000001L59 1005.0V1008.6L50 1011.4000000000001Z" fill="#b4b5b8"/><circle cx="47.5" cy="1009.6" r="0.9" fill="#2fbf3a"/></g><g clip-path="url(#listclip)"><path d="M500.5 248.5H510L513.5 252V265.5H500.5Z" fill="url(#docg)" stroke="#8c8c8c" stroke-width="1"/><path d="M510 248.5V252H513.5" fill="#fff" stroke="#8c8c8c" stroke-width="1"/><path d="M500.5 275.5H510L513.5 279V292.5H500.5Z" fill="url(#docg)" stroke="#8c8c8c" stroke-width="1"/><path d="M510 275.5V279H513.5" fill="#fff" stroke="#8c8c8c" stroke-width="1"/><path d="M500.5 302.5H510L513.5 306V319.5H500.5Z" fill="url(#docg)" stroke="#8c8c8c" stroke-width="1"/><path d="M510 302.5V306H513.5" fill="#fff" stroke="#8c8c8c" stroke-width="1"/><path d="M500.5 329.5H510L513.5 333V346.5H500.5Z" fill="url(#docg)" stroke="#8c8c8c" stroke-width="1"/><path d="M510 329.5V333H513.5" fill="#fff" stroke="#8c8c8c" stroke-width="1"/><path d="M500.5 356.5H510L513.5 360V373.5H500.5Z" fill="url(#docg)" stroke="#8c8c8c" stroke-width="1"/><path d="M510 356.5V360H513.5" fill="#fff" stroke="#8c8c8c" stroke-width="1"/><path d="M500.5 383.5H510L513.5 387V400.5H500.5Z" fill="url(#docg)" stroke="#8c8c8c" stroke-width="1"/><path d="M510 383.5V387H513.5" fill="#fff" stroke="#8c8c8c" stroke-width="1"/><path d="M500.5 410.5H510L513.5 414V427.5H500.5Z" fill="url(#docg)" stroke="#8c8c8c" stroke-width="1"/><path d="M510 410.5V414H513.5" fill="#fff" stroke="#8c8c8c" stroke-width="1"/><path d="M500.5 437.5H510L513.5 441V454.5H500.5Z" fill="url(#docg)" stroke="#8c8c8c" stroke-width="1"/><path d="M510 437.5V441H513.5" fill="#fff" stroke="#8c8c8c" stroke-width="1"/><path d="M500.5 464.5H510L513.5 468V481.5H500.5Z" fill="url(#docg)" stroke="#8c8c8c" stroke-width="1"/><path d="M510 464.5V468H513.5" fill="#fff" stroke="#8c8c8c" stroke-width="1"/><path d="M500.5 491.5H510L513.5 495V508.5H500.5Z" fill="url(#docg)" stroke="#8c8c8c" stroke-width="1"/><path d="M510 491.5V495H513.5" fill="#fff" stroke="#8c8c8c" stroke-width="1"/><path d="M500.5 518.5H510L513.5 522V535.5H500.5Z" fill="url(#docg)" stroke="#8c8c8c" stroke-width="1"/><path d="M510 518.5V522H513.5" fill="#fff" stroke="#8c8c8c" stroke-width="1"/><path d="M500.5 545.5H510L513.5 549V562.5H500.5Z" fill="url(#docg)" stroke="#8c8c8c" stroke-width="1"/><path d="M510 545.5V549H513.5" fill="#fff" stroke="#8c8c8c" stroke-width="1"/><path d="M500.5 572.5H510L513.5 576V589.5H500.5Z" fill="url(#docg)" stroke="#8c8c8c" stroke-width="1"/><path d="M510 572.5V576H513.5" fill="#fff" stroke="#8c8c8c" stroke-width="1"/><path d="M500.5 599.5H510L513.5 603V616.5H500.5Z" fill="url(#docg)" stroke="#8c8c8c" stroke-width="1"/><path d="M510 599.5V603H513.5" fill="#fff" stroke="#8c8c8c" stroke-width="1"/><path d="M500.5 626.5H510L513.5 630V643.5H500.5Z" fill="url(#docg)" stroke="#8c8c8c" stroke-width="1"/><path d="M510 626.5V630H513.5" fill="#fff" stroke="#8c8c8c" stroke-width="1"/><path d="M500.5 653.5H510L513.5 657V670.5H500.5Z" fill="url(#docg)" stroke="#8c8c8c" stroke-width="1"/><path d="M510 653.5V657H513.5" fill="#fff" stroke="#8c8c8c" stroke-width="1"/><path d="M500.5 680.5H510L513.5 684V697.5H500.5Z" fill="url(#docg)" stroke="#8c8c8c" stroke-width="1"/><path d="M510 680.5V684H513.5" fill="#fff" stroke="#8c8c8c" stroke-width="1"/><path d="M500.5 707.5H510L513.5 711V724.5H500.5Z" fill="url(#docg)" stroke="#8c8c8c" stroke-width="1"/><path d="M510 707.5V711H513.5" fill="#fff" stroke="#8c8c8c" stroke-width="1"/><path d="M500.5 734.5H510L513.5 738V751.5H500.5Z" fill="url(#docg)" stroke="#8c8c8c" stroke-width="1"/><path d="M510 734.5V738H513.5" fill="#fff" stroke="#8c8c8c" stroke-width="1"/><path d="M500.5 761.5H510L513.5 765V778.5H500.5Z" fill="url(#docg)" stroke="#8c8c8c" stroke-width="1"/><path d="M510 761.5V765H513.5" fill="#fff" stroke="#8c8c8c" stroke-width="1"/><path d="M500.5 788.5H510L513.5 792V805.5H500.5Z" fill="url(#docg)" stroke="#8c8c8c" stroke-width="1"/><path d="M510 788.5V792H513.5" fill="#fff" stroke="#8c8c8c" stroke-width="1"/><path d="M500.5 815.5H510L513.5 819V832.5H500.5Z" fill="url(#docg)" stroke="#8c8c8c" stroke-width="1"/><path d="M510 815.5V819H513.5" fill="#fff" stroke="#8c8c8c" stroke-width="1"/><path d="M500.5 842.5H510L513.5 846V859.5H500.5Z" fill="url(#docg)" stroke="#8c8c8c" stroke-width="1"/><path d="M510 842.5V846H513.5" fill="#fff" stroke="#8c8c8c" stroke-width="1"/><path d="M500.5 869.5H510L513.5 873V886.5H500.5Z" fill="url(#docg)" stroke="#8c8c8c" stroke-width="1"/><path d="M510 869.5V873H513.5" fill="#fff" stroke="#8c8c8c" stroke-width="1"/><path d="M500.5 896.5H510L513.5 900V913.5H500.5Z" fill="url(#docg)" stroke="#8c8c8c" stroke-width="1"/><path d="M510 896.5V900H513.5" fill="#fff" stroke="#8c8c8c" stroke-width="1"/><path d="M500.5 923.5H510L513.5 927V940.5H500.5Z" fill="url(#docg)" stroke="#8c8c8c" stroke-width="1"/><path d="M510 923.5V927H513.5" fill="#fff" stroke="#8c8c8c" stroke-width="1"/><path d="M500.5 950.5H510L513.5 954V967.5H500.5Z" fill="url(#docg)" stroke="#8c8c8c" stroke-width="1"/><path d="M510 950.5V954H513.5" fill="#fff" stroke="#8c8c8c" stroke-width="1"/><path d="M500.5 977.5H510L513.5 981V994.5H500.5Z" fill="url(#docg)" stroke="#8c8c8c" stroke-width="1"/><path d="M510 977.5V981H513.5" fill="#fff" stroke="#8c8c8c" stroke-width="1"/></g><path d="M20 1048.3L28.3 1047.2V1054.6H20Z M29.3 1047L40 1045.5V1054.6H29.3Z M20 1055.6H28.3V1063L20 1061.9Z M29.3 1055.6H40V1064.7L29.3 1063.2Z" fill="#fff"/><circle cx="93" cy="1052" r="5.8" fill="none" stroke="#fff" stroke-width="1.3"/><path d="M88.8 1056.2L81 1064" stroke="#fff" stroke-width="1.5"/><rect x="142" y="1046.5" width="16" height="17" fill="none" stroke="#fff" stroke-width="1.3"/><path d="M139.5 1049V1061M160.5 1049V1061" stroke="#fff" stroke-width="1.1"/><path fill-rule="evenodd" d="M201.1 1053.5 Q206 1042 215.5 1042 Q226 1042 226 1055 V1058.1 H210.3 Q211.5 1062.5 217 1062.5 Q221 1062.5 224 1060.9 V1066.9 Q220 1068.7 215.5 1068.7 Q204 1068.7 204 1056.5 Q204.5 1051 210.7 1049 Q205 1049.5 201.1 1053.5 Z M210 1052.8 H218.1 Q217.5 1047.2 214 1047.2 Q210.5 1047.2 210 1052.8 Z" fill="#0f7fdc"/><defs><radialGradient id="ieg" cx="0.45" cy="0.55" r="0.6"><stop offset="0" stop-color="#bff6ff"/><stop offset="0.6" stop-color="#5fd2f6"/><stop offset="1" stop-color="#1d9de0"/></radialGradient></defs><ellipse cx="273.5" cy="1054.5" rx="18" ry="5.5" fill="none" stroke="#f0b90e" stroke-width="2.2" transform="rotate(-40 273.5 1054.5)"/><path fill-rule="evenodd" d="M262.5 1055.2 A12.5 12.5 0 1 1 287.5 1055.2 V1057.2 H269.6 Q270.5 1062.8 276 1062.8 Q282 1062.8 286.8 1059.4 Q284 1067.7 275 1067.7 A12.5 12.5 0 0 1 262.5 1055.2Z M269.2 1053.1 Q269.5 1047.6 275 1047.6 Q280.6 1047.6 280.9 1053.1Z" fill="url(#ieg)"/><path d="M269.6 1057.2 H287.8 V1059.2 Q282 1062.8 276 1062.8 Q270.5 1062.8 269.6 1057.2Z" fill="#0d0610"/><path d="M259.7 1066.1 A18 5.5 -40 0 1 287.3 1042.9" fill="none" stroke="#f7c51c" stroke-width="2.2"/><defs><radialGradient id="tbg" cx="0.55" cy="0.35" r="0.7"><stop offset="0" stop-color="#6fb4f0"/><stop offset="0.6" stop-color="#2f7fd8"/><stop offset="1" stop-color="#1a4fae"/></radialGradient></defs><circle cx="477" cy="1054.6" r="14.2" fill="url(#tbg)"/><path d="M477 1054.6 L478 1069.5 L459 1069.5 L459 1062 Z" fill="#0d0610"/><path d="M463.3 1049 Q465 1044 470 1042 Q468 1046 468.5 1050 Z" fill="#3c86dc"/><path d="M464.6 1058 L469.5 1051.2 L481.7 1052.3 L481.7 1065.4 L466 1062Z" fill="#ebe8e3"/><path d="M469.5 1053 L473.5 1058.3 L481.7 1056.2" fill="none" stroke="#6d6d6d" stroke-width="0.9"/><circle cx="470.7" cy="1048" r="0.9" fill="#b05a2a"/><g transform="translate(526,1043.5) scale(1.5417,1.4412)"><path d="M1 0H11V9.5H12V14.6H1Z" fill="url(#fb)"/><path d="M0 0L4 2.6V17L0 14.6Z" fill="url(#ff)"/></g><g transform="translate(726,1043.5) scale(1.5417,1.4412)"><path d="M1 0H11V9.5H12V14.6H1Z" fill="url(#fb)"/><path d="M0 0L4 2.6V17L0 14.6Z" fill="url(#ff)"/></g><rect x="925" y="1040" width="30" height="30" rx="4" fill="#fff"/><rect x="929" y="1052" width="22" height="4" fill="#c8102e"/><rect x="931" y="1057" width="18" height="10" fill="#c8102e"/><rect x="938.5" y="1052" width="3" height="15" fill="#fff"/><path d="M940 1051 Q933 1043 932.5 1049 Q933 1051 940 1051 Q947 1051 947.5 1049 Q947 1043 940 1051Z" fill="none" stroke="#c8102e" stroke-width="1.5"/><path d="M989 1048.5 H1015 V1068.5 L989 1066.5Z" fill="#fff"/><path d="M996 1048 Q996 1041 1001.5 1041 Q1007 1041 1007 1048" fill="none" stroke="#fff" stroke-width="1.4"/><path d="M992.5 1054.5H1000.5V1058.5H992.5Z M1001.5 1054.5H1009.5V1058.5H1001.5Z M992.5 1059.5H1000.5V1063H992.5Z M1001.5 1059.5H1009.5V1063.5H1001.5Z" fill="#150910"/><rect x="1052.5" y="1040" width="22.5" height="30" fill="#fff"/><rect x="1054.5" y="1042" width="18.5" height="4.5" fill="#150910"/><path d="M1056 1050h3.5l-2 3h-1.5z" fill="#150910"/><path d="M1062 1050h3.5l-2 3h-1.5z" fill="#150910"/><path d="M1068 1050h3.5l-2 3h-1.5z" fill="#150910"/><path d="M1056 1055h3.5l-2 3h-1.5z" fill="#150910"/><path d="M1062 1055h3.5l-2 3h-1.5z" fill="#150910"/><path d="M1068 1055h3.5l-2 3h-1.5z" fill="#150910"/><path d="M1056 1060h3.5l-2 3h-1.5z" fill="#150910"/><path d="M1062 1060h3.5l-2 3h-1.5z" fill="#150910"/><path d="M1068 1060h3.5l-2 3h-1.5z" fill="#150910"/><path d="M1056 1065h3.5l-2 3h-1.5z" fill="#150910"/><path d="M1062 1065h3.5l-2 3h-1.5z" fill="#150910"/><path d="M1068 1065h3.5l-2 3h-1.5z" fill="#150910"/><path d="M1610 1059L1618 1051L1626 1059" fill="none" stroke="#fff" stroke-width="1.2"/><rect x="1641.5" y="1049.5" width="15" height="11" fill="none" stroke="#fff" stroke-width="1.1"/><rect x="1643" y="1051" width="12" height="8" fill="#fff"/><rect x="1656.5" y="1052.5" width="1.8" height="5" fill="#fff"/><path d="M1638.5 1049V1052H1641.5M1640 1052V1061" fill="none" stroke="#fff" stroke-width="1"/><path d="M1671 1063 A14 14 0 0 1 1685 1048.5 M1674.5 1063 A10.5 10.5 0 0 1 1685 1052.5 M1678 1063 A7 7 0 0 1 1685 1056" fill="none" stroke="#fff" stroke-width="1.1"/><circle cx="1684.5" cy="1062" r="1.6" fill="#fff"/><path d="M1698.5 1051.5H1702L1707 1047V1063L1702 1058.5H1698.5Z" fill="none" stroke="#fff" stroke-width="1.1"/><path d="M1710 1052 Q1712 1055 1710 1058 M1713 1049.5 Q1716.5 1055 1713 1060.5 M1716 1047 Q1721 1055 1716 1063" fill="none" stroke="#fff" stroke-width="1"/><path d="M1869 1045H1889V1062H1877L1873.5 1065.5V1062H1869Z" fill="#fff"/><path d="M1872.5 1049.5H1885.5M1872.5 1053.5H1885.5M1872.5 1057.5H1885.5" stroke="#150910" stroke-width="1.2"/><circle cx="1888.5" cy="1064.5" r="9" fill="#2a2a2a" stroke="#777" stroke-width="0.9"/><text x="1888.5" y="1069.7" font-size="14" font-family="Liberation Sans" font-weight="bold" fill="#fff" text-anchor="middle">2</text><rect x="1859.5" y="1001.5" width="27" height="27" fill="#cce8ff" stroke="#26a0da"/><rect x="1865.5" y="1008" width="5" height="15" fill="#fff" stroke="#8a8a8a" stroke-width="0.8"/><rect x="1866.8" y="1009.5" width="2.4" height="2.4" fill="#3b7fc4"/><rect x="1866.8" y="1014.2" width="2.4" height="2.4" fill="#4caf50"/><rect x="1866.8" y="1019" width="2.4" height="2.4" fill="#d23030"/><path d="M1872 1010.5h4.5M1878 1010.5h4.5M1872 1015.5h4.5M1878 1015.5h4.5M1872 1020.5h4.5M1878 1020.5h4.5" stroke="#808080" stroke-width="1"/><rect x="1892.5" y="1008.5" width="17" height="13" fill="#fff" stroke="#9a9a9a"/><rect x="1894" y="1010" width="14" height="10" fill="#5d9fe0"/><path d="M1894 1016 Q1898 1013 1908 1017V1020H1894Z" fill="#3a6d4a"/><path d="M1894 1018 Q1900 1017 1908 1019V1020H1894Z" fill="#86b8ea"/></svg></body></html>
